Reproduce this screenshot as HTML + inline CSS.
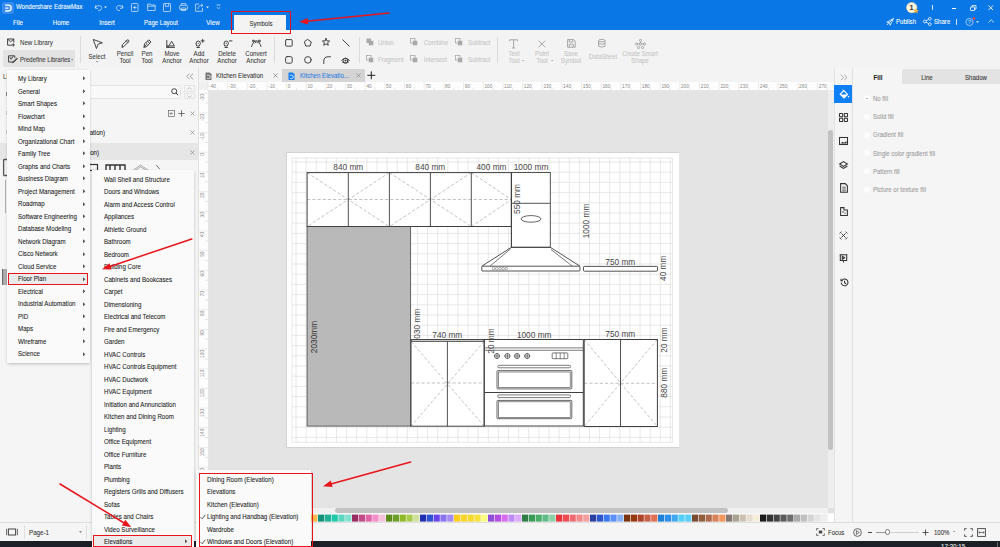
<!DOCTYPE html><html><head><meta charset="utf-8"><style>
html,body{margin:0;padding:0;width:1000px;height:547px;overflow:hidden;background:#f3f3f3;font-family:"Liberation Sans", sans-serif;}
.t{position:absolute;white-space:pre;line-height:1.2;font-family:"Liberation Sans", sans-serif;-webkit-text-stroke-width:0.08px;}
svg{position:absolute;overflow:visible}
</style></head><body>

<div style="position:absolute;left:0px;top:0px;width:1000px;height:30px;background:#0a77e6"></div>
<div style="position:absolute;left:0px;top:30px;width:1000px;height:38px;background:#f3f3f3"></div>
<div style="position:absolute;left:0px;top:67.5px;width:1000px;height:0.8px;background:#e2e2e2"></div>
<div style="position:absolute;left:0px;top:68px;width:198px;height:454px;background:#f5f5f5"></div>
<div style="position:absolute;left:198px;top:68px;width:1px;height:454px;background:#e0e0e0"></div>
<div style="position:absolute;left:199px;top:68px;width:636px;height:14px;background:#f3f3f3"></div>
<div style="position:absolute;left:199px;top:82px;width:636px;height:8px;background:#fafafa"></div>
<div style="position:absolute;left:199px;top:90px;width:9px;height:432px;background:#fafafa"></div>
<div style="position:absolute;left:208px;top:90px;width:620px;height:418px;background:#e4e4e4"></div>
<div style="position:absolute;left:835px;top:68px;width:165px;height:454px;background:#f5f5f5"></div>
<div style="position:absolute;left:0px;top:522px;width:1000px;height:19px;background:#f5f5f5"></div>
<div style="position:absolute;left:0px;top:522px;width:1000px;height:0.8px;background:#dedede"></div>
<div style="position:absolute;left:0px;top:541px;width:1000px;height:6px;background:#1c2026"></div>
<svg style="left:2px;top:1.5px" width="12" height="12" viewBox="0 0 12 12"><rect x="0" y="0" width="12" height="12" rx="2.5" fill="#3b8cf0"/><path d="M3.2 3.2 H6.3 A2.9 2.9 0 0 1 6.3 9 H3.2" fill="none" stroke="#fff" stroke-width="1.3"/><path d="M3.2 6.1 H6.6" stroke="#fff" stroke-width="1.2"/></svg>
<div class="t" style="left:15.8px;top:3.34px;font-size:7.26px;color:#fff;transform:scaleX(0.835);transform-origin:0 50%;">Wondershare EdrawMax</div>
<svg style="left:94px;top:3px" width="9" height="8" viewBox="0 0 9 8"><path d="M2 2 L1 5 L4 5.5" fill="none" stroke="#d6e6fa" stroke-width="0.75"/><path d="M1.3 4.8 C3 1.5 8 2 7.6 5.5 C7.3 7.2 5 7.6 4 7.5" fill="none" stroke="#d6e6fa" stroke-width="0.75"/></svg>
<svg style="left:103.5px;top:6px" width="4" height="3" viewBox="0 0 4 3"><path d="M0 0.5 L3 0.5 L1.5 2.2 Z" fill="#e6f0fc"/></svg>
<svg style="left:115px;top:3px" width="9" height="8" viewBox="0 0 9 8"><path d="M7 2 L8 5 L5 5.5" fill="none" stroke="#d6e6fa" stroke-width="0.75"/><path d="M7.7 4.8 C6 1.5 1 2 1.4 5.5 C1.7 7.2 4 7.6 5 7.5" fill="none" stroke="#d6e6fa" stroke-width="0.75"/></svg>
<svg style="left:130.5px;top:2.8px" width="8" height="9" viewBox="0 0 8 9"><rect x="0.5" y="0.5" width="6.5" height="8" rx="0.8" fill="none" stroke="#d6e6fa" stroke-width="0.75"/><path d="M3.75 2.7 V6.3 M1.95 4.5 H5.55" fill="none" stroke="#d6e6fa" stroke-width="0.75"/></svg>
<svg style="left:146.5px;top:3px" width="9" height="8" viewBox="0 0 9 8"><path d="M0.6 1 H3.3 L4.2 2 H8.2 V7.5 H0.6 Z" fill="none" stroke="#d6e6fa" stroke-width="0.75"/><path d="M0.6 3.2 H8.2" fill="none" stroke="#d6e6fa" stroke-width="0.75"/></svg>
<svg style="left:163px;top:2.8px" width="8" height="9" viewBox="0 0 8 9"><rect x="0.5" y="0.5" width="7" height="8" rx="0.6" fill="none" stroke="#d6e6fa" stroke-width="0.75"/><path d="M2.3 0.5 V3.3 H5.7 V0.5" fill="none" stroke="#d6e6fa" stroke-width="0.75"/></svg>
<svg style="left:178.5px;top:3px" width="9" height="8" viewBox="0 0 9 8"><rect x="0.5" y="2.3" width="8" height="4.2" rx="1.3" fill="none" stroke="#d6e6fa" stroke-width="0.75"/><path d="M2.2 2.3 V0.6 H6.8 V2.3 M2.2 5 H6.8 V7.5 H2.2 Z" fill="none" stroke="#d6e6fa" stroke-width="0.75"/></svg>
<svg style="left:195px;top:2.8px" width="9" height="9" viewBox="0 0 9 9"><path d="M4.2 1 H0.6 V8.3 H7.5 V4.8" fill="none" stroke="#d6e6fa" stroke-width="0.75"/><path d="M3 6 C3 3.5 4.5 2.3 7.8 2.3 M6.2 0.8 L7.9 2.3 L6.2 3.8" fill="none" stroke="#d6e6fa" stroke-width="0.75"/></svg>
<svg style="left:205.5px;top:6px" width="4" height="3" viewBox="0 0 4 3"><path d="M0 0.5 L3 0.5 L1.5 2.2 Z" fill="#e6f0fc"/></svg>
<svg style="left:215.5px;top:3.5px" width="5" height="7" viewBox="0 0 5 7"><path d="M0.5 1 H4.5 M1 3.2 L2.5 4.8 L4 3.2" fill="none" stroke="#d6e6fa" stroke-width="0.75"/></svg>
<svg style="left:905.5px;top:2.3px" width="14" height="12" viewBox="0 0 14 12"><circle cx="5.7" cy="5.6" r="5.2" fill="#fff4dd" stroke="#f3d9a1" stroke-width="0.6"/><text x="5.5" y="8.4" font-family="Liberation Sans" font-weight="bold" font-size="8" fill="#3c3c3c" text-anchor="middle">1</text><path d="M10 6.2 L10.9 8 L12.8 8.2 L11.4 9.4 L11.8 11.2 L10 10.3 L8.3 11.2 L8.7 9.4 L7.3 8.2 L9.2 8 Z" fill="#f7b23b"/></svg>
<div style="position:absolute;left:931.5px;top:4.5px;width:0.8px;height:5.5px;background:#cfe2f9"></div>
<div style="position:absolute;left:951.5px;top:8.3px;width:4.5px;height:0.9px;background:#fff"></div>
<svg style="left:969.5px;top:4.5px" width="7" height="6" viewBox="0 0 7 6"><rect x="0.5" y="2" width="4" height="3.5" rx="0.5" fill="none" stroke="#fff" stroke-width="0.8"/><path d="M2 2 V0.6 H6 V4 H4.5" fill="none" stroke="#fff" stroke-width="0.8"/></svg>
<svg style="left:987.5px;top:5px" width="6" height="6" viewBox="0 0 6 6"><path d="M0.5 0.5 L5 5 M5 0.5 L0.5 5" stroke="#fff" stroke-width="0.9"/></svg>
<div class="t" style="left:-82px;width:200px;text-align:center;top:19.14px;font-size:7.44px;color:#fff;transform:scaleX(0.835);transform-origin:50% 50%;">File</div>
<div class="t" style="left:-39px;width:200px;text-align:center;top:19.14px;font-size:7.44px;color:#fff;transform:scaleX(0.835);transform-origin:50% 50%;">Home</div>
<div class="t" style="left:7.200000000000003px;width:200px;text-align:center;top:19.14px;font-size:7.44px;color:#fff;transform:scaleX(0.835);transform-origin:50% 50%;">Insert</div>
<div class="t" style="left:60.599999999999994px;width:200px;text-align:center;top:19.24px;font-size:7.26px;color:#fff;transform:scaleX(0.835);transform-origin:50% 50%;">Page Layout</div>
<div class="t" style="left:113px;width:200px;text-align:center;top:19.14px;font-size:7.44px;color:#fff;transform:scaleX(0.835);transform-origin:50% 50%;">View</div>
<div style="position:absolute;left:234.4px;top:15px;width:52px;height:15px;background:#f3f3f3"></div>
<div class="t" style="left:160.5px;width:200px;text-align:center;top:19.64px;font-size:7.26px;color:#333;transform:scaleX(0.835);transform-origin:50% 50%;">Symbols</div>
<svg style="left:885.5px;top:17.5px" width="8" height="8" viewBox="0 0 8 8"><path d="M1 7 L3 4.5 M0.8 4.2 L7.5 0.5 L4.2 7.3 L3.4 4.5 Z M3.4 4.5 L7.5 0.5" fill="none" stroke="#fff" stroke-width="0.75"/></svg>
<div class="t" style="left:896px;top:17.81px;font-size:7.32px;color:#fff;transform:scaleX(0.835);transform-origin:0 50%;">Publish</div>
<svg style="left:922.5px;top:17px" width="9" height="9" viewBox="0 0 9 9"><circle cx="1.8" cy="4.5" r="1.4" fill="none" stroke="#fff" stroke-width="0.75"/><circle cx="6.8" cy="1.8" r="1.4" fill="none" stroke="#fff" stroke-width="0.75"/><circle cx="6.8" cy="7.2" r="1.4" fill="none" stroke="#fff" stroke-width="0.75"/><path d="M3 3.8 L5.6 2.4 M3 5.2 L5.6 6.6" stroke="#fff" stroke-width="0.75"/></svg>
<div class="t" style="left:933.8px;top:17.81px;font-size:7.32px;color:#fff;transform:scaleX(0.835);transform-origin:0 50%;">Share</div>
<div style="position:absolute;left:956px;top:18.5px;width:0.8px;height:6px;background:#cfe2f9"></div>
<svg style="left:964.5px;top:16.5px" width="12" height="10" viewBox="0 0 12 10"><circle cx="4.5" cy="5" r="3.6" fill="none" stroke="#cfe2f9" stroke-width="0.7"/><text x="4.5" y="7" font-family="Liberation Sans" font-size="5.5" fill="#cfe2f9" text-anchor="middle">?</text><circle cx="9" cy="1.5" r="1.2" fill="#ff3b3b"/></svg>
<svg style="left:976.2px;top:20.5px" width="4" height="3" viewBox="0 0 4 3"><path d="M0 0.3 L3 0.3 L1.5 2 Z" fill="#e6f0fc"/></svg>
<svg style="left:987.5px;top:18.5px" width="7" height="5" viewBox="0 0 7 5"><path d="M0.5 3.5 L3.2 0.8 L6 3.5" fill="none" stroke="#e6f0fc" stroke-width="0.8"/></svg>
<div style="position:absolute;left:231.2px;top:11px;width:59.8px;height:23px;border:1.9px solid #e8141b;box-sizing:border-box"></div>
<svg style="left:292.5px;top:7.199999999999999px" width="102.0" height="21.1" viewBox="0 0 102.0 21.1"><path d="M96.00 6.00 L11.37 14.56" stroke="#e8141b" stroke-width="1.5" stroke-linecap="round"/><path d="M6.00 15.10 L14.62 10.91 L15.29 17.48 Z" fill="#e8141b"/></svg>
<svg style="left:7.2px;top:38px" width="9" height="9" viewBox="0 0 9 9"><path d="M6.8 4.2 V1 H0.6 V7.2 H4.5" fill="none" stroke="#3a3a3a" stroke-width="0.95" stroke-linejoin="round" stroke-linecap="round"/><path d="M0.6 1.2 L3.7 3.8 L6.8 1.2" fill="none" stroke="#3a3a3a" stroke-width="0.95" stroke-linejoin="round" stroke-linecap="round"/><path d="M6.3 5.3 V8.6 M4.7 6.9 H7.9" fill="none" stroke="#3a3a3a" stroke-width="0.9"/></svg>
<div class="t" style="left:19.8px;top:39.17px;font-size:7.38px;color:#3c3c3c;transform:scaleX(0.835);transform-origin:0 50%;">New Library</div>
<div style="position:absolute;left:3.2px;top:50.3px;width:72px;height:16.6px;background:#e3e3e3"></div>
<svg style="left:7.5px;top:55px" width="10" height="8" viewBox="0 0 10 8"><path d="M6.8 2.5 V0.8 H0.6 V7 H5" fill="none" stroke="#3a3a3a" stroke-width="0.95" stroke-linejoin="round" stroke-linecap="round"/><path d="M2 2.5 L3.2 4.3 L5 1.5" fill="none" stroke="#3a3a3a" stroke-width="0.95" stroke-linejoin="round" stroke-linecap="round"/><path d="M5 6.8 L8.8 3 L9.4 3.6 L5.6 7.4 L4.7 7.6 Z" fill="none" stroke="#3a3a3a" stroke-width="0.95" stroke-linejoin="round" stroke-linecap="round"/></svg>
<div class="t" style="left:19.8px;top:55.98px;font-size:7.20px;color:#3c3c3c;transform:scaleX(0.835);transform-origin:0 50%;">Predefine Libraries</div>
<svg style="left:71px;top:58.5px" width="3" height="2" viewBox="0 0 3 2"><path d="M0 0 L2.4 0 L1.2 1.2 Z" fill="#777"/></svg>
<div style="position:absolute;left:80.2px;top:36.3px;width:0.8px;height:26.5px;background:#dcdcdc"></div>
<svg style="left:92.6px;top:38.8px" width="10" height="10" viewBox="0 0 10 10"><path d="M0.6 0.6 L9.4 3.8 L5.2 5.1 L3.6 9.2 Z" fill="none" stroke="#3a3a3a" stroke-width="0.95" stroke-linejoin="round" stroke-linecap="round"/></svg>
<div class="t" style="left:-2.799999999999997px;width:200px;text-align:center;top:52.91px;font-size:7.32px;color:#3c3c3c;transform:scaleX(0.835);transform-origin:50% 50%;">Select</div>
<svg style="left:96px;top:60.5px" width="3" height="2" viewBox="0 0 3 2"><path d="M0 0 L2.4 0 L1.2 1.2 Z" fill="#777"/></svg>
<svg style="left:120.5px;top:39px" width="9" height="9" viewBox="0 0 9 9"><path d="M1 8 L1.3 5.8 L6 1.1 Q6.8 0.4 7.6 1.2 Q8.3 2 7.6 2.7 L2.9 7.5 Z M5.2 1.9 L6.9 3.6" fill="none" stroke="#3a3a3a" stroke-width="0.95" stroke-linejoin="round" stroke-linecap="round"/><path d="M1 8 L1.2 6.5 L2.4 7.7 Z" fill="#3a3a3a"/></svg>
<div class="t" style="left:24.700000000000003px;width:200px;text-align:center;top:49.51px;font-size:7.32px;color:#3c3c3c;transform:scaleX(0.835);transform-origin:50% 50%;">Pencil</div>
<div class="t" style="left:24.700000000000003px;width:200px;text-align:center;top:57.31px;font-size:7.32px;color:#3c3c3c;transform:scaleX(0.835);transform-origin:50% 50%;">Tool</div>
<svg style="left:142.8px;top:39px" width="9" height="9" viewBox="0 0 9 9"><path d="M1 8 L1.6 4.6 L4.5 2.2 L6.6 4.3 L4.2 7.2 Z M4.5 2.2 L5.8 0.8 L8 3 L6.6 4.3" fill="none" stroke="#3a3a3a" stroke-width="0.95" stroke-linejoin="round" stroke-linecap="round"/><circle cx="3.8" cy="5" r="0.7" fill="#3a3a3a"/><path d="M1 8 L3 6" fill="none" stroke="#3a3a3a" stroke-width="0.95" stroke-linejoin="round" stroke-linecap="round"/></svg>
<div class="t" style="left:47.19999999999999px;width:200px;text-align:center;top:49.51px;font-size:7.32px;color:#3c3c3c;transform:scaleX(0.835);transform-origin:50% 50%;">Pen</div>
<div class="t" style="left:47.19999999999999px;width:200px;text-align:center;top:57.31px;font-size:7.32px;color:#3c3c3c;transform:scaleX(0.835);transform-origin:50% 50%;">Tool</div>
<svg style="left:166px;top:39.5px" width="9" height="9" viewBox="0 0 9 9"><path d="M0.8 0.5 V7 M0.8 7.4 H8.6" fill="none" stroke="#3a3a3a" stroke-width="0.95" stroke-linejoin="round" stroke-linecap="round"/><path d="M3 5.6 L5.6 1.3 L8.2 5.6 Z" fill="none" stroke="#3a3a3a" stroke-width="0.95" stroke-linejoin="round" stroke-linecap="round"/><circle cx="1.6" cy="6.5" r="0.9" fill="none" stroke="#3a3a3a" stroke-width="0.95" stroke-linejoin="round" stroke-linecap="round"/></svg>
<div class="t" style="left:71.6px;width:200px;text-align:center;top:49.51px;font-size:7.32px;color:#3c3c3c;transform:scaleX(0.835);transform-origin:50% 50%;">Move</div>
<div class="t" style="left:71.6px;width:200px;text-align:center;top:57.31px;font-size:7.32px;color:#3c3c3c;transform:scaleX(0.835);transform-origin:50% 50%;">Anchor</div>
<svg style="left:194.8px;top:38.5px" width="10" height="10" viewBox="0 0 10 10"><path d="M1 4.5 Q1 2 3.2 2 Q5.4 2 5.4 4.5 L4.3 7 H2.1 Z" fill="none" stroke="#3a3a3a" stroke-width="0.95" stroke-linejoin="round" stroke-linecap="round"/><path d="M2 8.5 H4.4" fill="none" stroke="#3a3a3a" stroke-width="0.95" stroke-linejoin="round" stroke-linecap="round"/><circle cx="3.2" cy="4.3" r="0.6" fill="#3a3a3a"/><path d="M7.7 0.4 V3.4 M6.2 1.9 H9.2" fill="none" stroke="#3a3a3a" stroke-width="0.95" stroke-linejoin="round" stroke-linecap="round"/></svg>
<div class="t" style="left:99.30000000000001px;width:200px;text-align:center;top:49.51px;font-size:7.32px;color:#3c3c3c;transform:scaleX(0.835);transform-origin:50% 50%;">Add</div>
<div class="t" style="left:99.30000000000001px;width:200px;text-align:center;top:57.31px;font-size:7.32px;color:#3c3c3c;transform:scaleX(0.835);transform-origin:50% 50%;">Anchor</div>
<svg style="left:222.8px;top:38.5px" width="10" height="10" viewBox="0 0 10 10"><path d="M1 4.5 Q1 2 3.2 2 Q5.4 2 5.4 4.5 L4.3 7 H2.1 Z" fill="none" stroke="#3a3a3a" stroke-width="0.95" stroke-linejoin="round" stroke-linecap="round"/><path d="M2 8.5 H4.4" fill="none" stroke="#3a3a3a" stroke-width="0.95" stroke-linejoin="round" stroke-linecap="round"/><circle cx="3.2" cy="4.3" r="0.6" fill="#3a3a3a"/><path d="M6.4 1.9 H9" fill="none" stroke="#3a3a3a" stroke-width="0.95" stroke-linejoin="round" stroke-linecap="round"/></svg>
<div class="t" style="left:127.4px;width:200px;text-align:center;top:49.51px;font-size:7.32px;color:#3c3c3c;transform:scaleX(0.835);transform-origin:50% 50%;">Delete</div>
<div class="t" style="left:127.4px;width:200px;text-align:center;top:57.31px;font-size:7.32px;color:#3c3c3c;transform:scaleX(0.835);transform-origin:50% 50%;">Anchor</div>
<svg style="left:251px;top:39px" width="11" height="9" viewBox="0 0 11 9"><path d="M0.6 7.5 Q2.5 1.8 5.3 1.8 Q8.2 1.8 10 7.5" fill="none" stroke="#3a3a3a" stroke-width="0.95" stroke-linejoin="round" stroke-linecap="round"/><circle cx="2.3" cy="2" r="0.9" fill="none" stroke="#3a3a3a" stroke-width="0.95" stroke-linejoin="round" stroke-linecap="round"/><circle cx="8.3" cy="2" r="0.9" fill="none" stroke="#3a3a3a" stroke-width="0.95" stroke-linejoin="round" stroke-linecap="round"/><path d="M4 4 L5.3 2.6 L6.6 4" fill="none" stroke="#3a3a3a" stroke-width="0.95" stroke-linejoin="round" stroke-linecap="round"/></svg>
<div class="t" style="left:156.3px;width:200px;text-align:center;top:49.51px;font-size:7.32px;color:#3c3c3c;transform:scaleX(0.835);transform-origin:50% 50%;">Convert</div>
<div class="t" style="left:156.3px;width:200px;text-align:center;top:57.31px;font-size:7.32px;color:#3c3c3c;transform:scaleX(0.835);transform-origin:50% 50%;">Anchor</div>
<div style="position:absolute;left:274.3px;top:36.8px;width:0.8px;height:26px;background:#dcdcdc"></div>
<svg style="left:284.5px;top:38.5px" width="8" height="8" viewBox="0 0 8 8"><rect x="0.6" y="0.6" width="6.6" height="6.6" rx="0.8" fill="none" stroke="#3a3a3a" stroke-width="0.95" stroke-linejoin="round" stroke-linecap="round"/></svg>
<svg style="left:303.5px;top:38.5px" width="8" height="8" viewBox="0 0 8 8"><path d="M3.9 0.6 L7.3 3 L6.1 7 H1.7 L0.5 3 Z" fill="none" stroke="#3a3a3a" stroke-width="0.95" stroke-linejoin="round" stroke-linecap="round"/></svg>
<svg style="left:322.3px;top:38.3px" width="8" height="8" viewBox="0 0 8 8"><path d="M4 0.5 L5 2.9 L7.6 3 L5.6 4.7 L6.3 7.3 L4 5.9 L1.7 7.3 L2.4 4.7 L0.4 3 L3 2.9 Z" fill="none" stroke="#3a3a3a" stroke-width="0.95" stroke-linejoin="round" stroke-linecap="round"/></svg>
<svg style="left:341.5px;top:38.5px" width="8" height="8" viewBox="0 0 8 8"><path d="M0.8 0.8 L7.2 7.2" fill="none" stroke="#3a3a3a" stroke-width="0.95" stroke-linejoin="round" stroke-linecap="round"/></svg>
<svg style="left:284.5px;top:55.5px" width="8" height="8" viewBox="0 0 8 8"><rect x="0.6" y="0.6" width="6.6" height="6.6" rx="1.6" fill="none" stroke="#3a3a3a" stroke-width="0.95" stroke-linejoin="round" stroke-linecap="round"/></svg>
<svg style="left:303.5px;top:55.5px" width="8" height="8" viewBox="0 0 8 8"><circle cx="3.9" cy="3.9" r="3.3" fill="none" stroke="#3a3a3a" stroke-width="0.95" stroke-linejoin="round" stroke-linecap="round"/></svg>
<svg style="left:322.5px;top:55.5px" width="8" height="8" viewBox="0 0 8 8"><path d="M0.8 7.5 V5 Q0.8 0.8 5 0.8 H7.5" fill="none" stroke="#3a3a3a" stroke-width="0.95" stroke-linejoin="round" stroke-linecap="round"/></svg>
<svg style="left:341px;top:55.5px" width="9" height="8" viewBox="0 0 9 8"><path d="M0.6 4.6 Q4.5 -0.6 8.4 4.6" fill="none" stroke="#3a3a3a" stroke-width="0.95" stroke-linejoin="round" stroke-linecap="round"/><circle cx="4.5" cy="4.6" r="2.4" fill="none" stroke="#3a3a3a" stroke-width="0.95" stroke-linejoin="round" stroke-linecap="round"/><circle cx="4.5" cy="4.6" r="1" fill="#3a3a3a"/><path d="M1.5 6.3 Q4.5 8.5 7.5 6.3" fill="none" stroke="#3a3a3a" stroke-width="0.95" stroke-linejoin="round" stroke-linecap="round"/></svg>
<div style="position:absolute;left:359.3px;top:36.8px;width:0.8px;height:26px;background:#dcdcdc"></div>
<svg style="left:365.5px;top:38px" width="8" height="8" viewBox="0 0 8 8"><rect x="0.5" y="0.5" width="4.5" height="4.5" fill="#a8a8a8"/><rect x="2.8" y="2.8" width="4.5" height="4.5" fill="#a8a8a8"/></svg>
<div class="t" style="left:378px;top:38.68px;font-size:7.20px;color:#c6c6c6;transform:scaleX(0.835);transform-origin:0 50%;">Union</div>
<svg style="left:410.4px;top:38px" width="8" height="8" viewBox="0 0 8 8"><rect x="0.5" y="0.5" width="4.5" height="4.5" fill="none" stroke="#a8a8a8" stroke-width="0.8"/><rect x="2.8" y="2.8" width="4.5" height="4.5" fill="#a8a8a8"/></svg>
<div class="t" style="left:423.6px;top:38.68px;font-size:7.20px;color:#c6c6c6;transform:scaleX(0.835);transform-origin:0 50%;">Combine</div>
<svg style="left:455px;top:38px" width="8" height="8" viewBox="0 0 8 8"><rect x="0.5" y="0.5" width="4.5" height="4.5" fill="none" stroke="#a8a8a8" stroke-width="0.8"/><rect x="2.8" y="2.8" width="4.5" height="4.5" fill="#a8a8a8"/></svg>
<div class="t" style="left:467.7px;top:38.68px;font-size:7.20px;color:#c6c6c6;transform:scaleX(0.835);transform-origin:0 50%;">Subtract</div>
<svg style="left:365.5px;top:55.2px" width="8" height="8" viewBox="0 0 8 8"><rect x="0.5" y="0.5" width="4.5" height="4.5" fill="none" stroke="#a8a8a8" stroke-width="0.8"/><rect x="2.8" y="2.8" width="4.5" height="4.5" fill="#a8a8a8"/></svg>
<div class="t" style="left:378px;top:55.88px;font-size:7.20px;color:#c6c6c6;transform:scaleX(0.835);transform-origin:0 50%;">Fragment</div>
<svg style="left:410.4px;top:55.2px" width="8" height="8" viewBox="0 0 8 8"><rect x="0.5" y="0.5" width="4.5" height="4.5" fill="none" stroke="#a8a8a8" stroke-width="0.8"/><rect x="2.8" y="2.8" width="4.5" height="4.5" fill="#a8a8a8"/></svg>
<div class="t" style="left:423.6px;top:55.88px;font-size:7.20px;color:#c6c6c6;transform:scaleX(0.835);transform-origin:0 50%;">Intersect</div>
<svg style="left:455px;top:55.2px" width="8" height="8" viewBox="0 0 8 8"><rect x="0.5" y="0.5" width="4.5" height="4.5" fill="none" stroke="#a8a8a8" stroke-width="0.8"/><rect x="2.8" y="2.8" width="4.5" height="4.5" fill="#a8a8a8"/></svg>
<div class="t" style="left:467.7px;top:55.88px;font-size:7.20px;color:#c6c6c6;transform:scaleX(0.835);transform-origin:0 50%;">Subtract</div>
<div style="position:absolute;left:497.3px;top:36.8px;width:0.8px;height:26px;background:#dcdcdc"></div>
<svg style="left:508.8px;top:38.8px" width="10" height="10" viewBox="0 0 10 10"><path d="M0.6 2.2 V0.8 H8.6 V2.2 M4.6 0.8 V9 M3 9 H6.2" fill="none" stroke="#9a9a9a" stroke-width="0.85"/></svg>
<div class="t" style="left:413.79999999999995px;width:200px;text-align:center;top:49.51px;font-size:7.32px;color:#c6c6c6;transform:scaleX(0.835);transform-origin:50% 50%;">Text</div>
<div class="t" style="left:413.79999999999995px;width:200px;text-align:center;top:57.31px;font-size:7.32px;color:#c6c6c6;transform:scaleX(0.835);transform-origin:50% 50%;">Tool</div>
<svg style="left:522.2px;top:59.8px" width="3" height="2" viewBox="0 0 3 2"><path d="M0 0 L2.4 0 L1.2 1.2 Z" fill="#aaa"/></svg>
<svg style="left:537.5px;top:39.5px" width="8" height="8" viewBox="0 0 8 8"><path d="M0.6 0.6 L7.2 7.2 M7.2 0.6 L0.6 7.2" fill="none" stroke="#9a9a9a" stroke-width="0.85"/></svg>
<div class="t" style="left:441.70000000000005px;width:200px;text-align:center;top:49.51px;font-size:7.32px;color:#c6c6c6;transform:scaleX(0.835);transform-origin:50% 50%;">Point</div>
<div class="t" style="left:441.9px;width:200px;text-align:center;top:57.31px;font-size:7.32px;color:#c6c6c6;transform:scaleX(0.835);transform-origin:50% 50%;">Tool</div>
<svg style="left:551px;top:59.8px" width="3" height="2" viewBox="0 0 3 2"><path d="M0 0 L2.4 0 L1.2 1.2 Z" fill="#aaa"/></svg>
<svg style="left:567.2px;top:39.2px" width="9" height="9" viewBox="0 0 9 9"><path d="M0.6 0.6 H6.6 L8.2 2.2 V8.2 H0.6 Z M2.3 0.6 V3 H5.8 V0.6 M2.3 8.2 V5.2 H6.3 V8.2" fill="none" stroke="#9a9a9a" stroke-width="0.85"/></svg>
<div class="t" style="left:471.20000000000005px;width:200px;text-align:center;top:49.51px;font-size:7.32px;color:#c6c6c6;transform:scaleX(0.835);transform-origin:50% 50%;">Save</div>
<div class="t" style="left:471.20000000000005px;width:200px;text-align:center;top:57.31px;font-size:7.32px;color:#c6c6c6;transform:scaleX(0.835);transform-origin:50% 50%;">Symbol</div>
<svg style="left:598px;top:39.2px" width="8" height="9" viewBox="0 0 8 9"><ellipse cx="3.8" cy="1.6" rx="3.2" ry="1.2" fill="none" stroke="#9a9a9a" stroke-width="0.85"/><path d="M0.6 1.6 V7.2 Q3.8 9 7 7.2 V1.6 M0.6 4.4 Q3.8 6.2 7 4.4" fill="none" stroke="#9a9a9a" stroke-width="0.85"/></svg>
<div class="t" style="left:502.6px;width:200px;text-align:center;top:52.98px;font-size:7.20px;color:#c6c6c6;transform:scaleX(0.835);transform-origin:50% 50%;">DataSheet</div>
<svg style="left:634.5px;top:38.6px" width="11" height="10" viewBox="0 0 11 10"><circle cx="5.5" cy="1.5" r="1.1" fill="none" stroke="#9a9a9a" stroke-width="0.85"/><circle cx="1.6" cy="5" r="1.1" fill="none" stroke="#9a9a9a" stroke-width="0.85"/><circle cx="5.5" cy="5" r="1.1" fill="none" stroke="#9a9a9a" stroke-width="0.85"/><circle cx="9.4" cy="5" r="1.1" fill="none" stroke="#9a9a9a" stroke-width="0.85"/><circle cx="3.5" cy="8.5" r="1.1" fill="none" stroke="#9a9a9a" stroke-width="0.85"/><circle cx="7.5" cy="8.5" r="1.1" fill="none" stroke="#9a9a9a" stroke-width="0.85"/><path d="M5.5 2.6 V3.9 M2.7 5 H4.4 M6.6 5 H8.3" fill="none" stroke="#9a9a9a" stroke-width="0.85"/></svg>
<div class="t" style="left:539.5px;width:200px;text-align:center;top:49.58px;font-size:7.20px;color:#c6c6c6;transform:scaleX(0.835);transform-origin:50% 50%;">Create Smart</div>
<div class="t" style="left:539.5px;width:200px;text-align:center;top:57.38px;font-size:7.20px;color:#c6c6c6;transform:scaleX(0.835);transform-origin:50% 50%;">Shape</div>
<div class="t" style="left:3px;top:73.11px;font-size:7.32px;color:#444;transform:scaleX(0.835);transform-origin:0 50%;">Libraries</div>
<svg style="left:185.5px;top:72.5px" width="8" height="7" viewBox="0 0 8 7"><path d="M3.6 0.6 L0.8 3.4 L3.6 6.2 M7 0.6 L4.2 3.4 L7 6.2" fill="none" stroke="#777" stroke-width="0.7"/></svg>
<div style="position:absolute;left:7px;top:85.4px;width:174px;height:13.8px;background:#f9f9f9;border:0.8px solid #e4e4e4;box-sizing:border-box;border-radius:1.5px"></div>
<svg style="left:170.5px;top:87.5px" width="8" height="8" viewBox="0 0 8 8"><circle cx="3.2" cy="3.2" r="2.5" fill="none" stroke="#333" stroke-width="0.9"/><path d="M5 5 L7.2 7.2" stroke="#333" stroke-width="1"/></svg>
<div style="position:absolute;left:184.2px;top:85.4px;width:10.5px;height:6.6px;border:0.7px solid #e4e4e4;box-sizing:border-box;border-radius:1px"></div>
<div style="position:absolute;left:184.2px;top:93px;width:10.5px;height:6.4px;border:0.7px solid #e4e4e4;box-sizing:border-box;border-radius:1px"></div>
<svg style="left:187px;top:87px" width="5" height="3" viewBox="0 0 5 3"><path d="M0.4 2.4 L2.5 0.6 L4.6 2.4" fill="none" stroke="#999" stroke-width="0.6"/></svg>
<svg style="left:187px;top:95px" width="5" height="3" viewBox="0 0 5 3"><path d="M0.4 0.6 L2.5 2.4 L4.6 0.6" fill="none" stroke="#999" stroke-width="0.6"/></svg>
<div style="position:absolute;left:5.8px;top:91.5px;width:1.2px;height:4px;background:#888"></div>
<div style="position:absolute;left:5.8px;top:111px;width:1px;height:4px;background:#ccc"></div>
<div style="position:absolute;left:5.8px;top:129.5px;width:1px;height:4px;background:#ccc"></div>
<svg style="left:167.5px;top:109.8px" width="7" height="7" viewBox="0 0 7 7"><rect x="0.5" y="0.5" width="6" height="6" fill="none" stroke="#666" stroke-width="0.7"/><path d="M5 3.5 H2 M3.3 2.2 L2 3.5 L3.3 4.8" fill="none" stroke="#666" stroke-width="0.7"/></svg>
<svg style="left:177.8px;top:109.8px" width="7" height="7" viewBox="0 0 7 7"><path d="M3.5 0.3 V6.7 M0.3 3.5 H6.7" stroke="#555" stroke-width="0.8"/></svg>
<svg style="left:189.5px;top:110.8px" width="5" height="5" viewBox="0 0 5 5"><path d="M0.5 0.5 L4.5 4.5 M4.5 0.5 L0.5 4.5" stroke="#888" stroke-width="0.7"/></svg>
<div class="t" style="left:-94.8px;width:200px;text-align:right;top:129.21px;font-size:7.32px;color:#1a1a1a;transform:scaleX(0.835);transform-origin:100% 50%;">Windows and Doors (Elevation)</div>
<svg style="left:189.5px;top:130.3px" width="5" height="5" viewBox="0 0 5 5"><path d="M0.5 0.5 L4.5 4.5 M4.5 0.5 L0.5 4.5" stroke="#888" stroke-width="0.7"/></svg>
<div style="position:absolute;left:0px;top:142.7px;width:198px;height:17.8px;background:#e6e6e6"></div>
<div class="t" style="left:-101.5px;width:200px;text-align:right;top:148.91px;font-size:7.32px;color:#1a1a1a;transform:scaleX(0.835);transform-origin:100% 50%;">Lighting and Handbag (Elevation)</div>
<svg style="left:189.5px;top:150px" width="5" height="5" viewBox="0 0 5 5"><path d="M0.5 0.5 L4.5 4.5 M4.5 0.5 L0.5 4.5" stroke="#888" stroke-width="0.7"/></svg>
<svg style="left:3px;top:164px" width="195" height="30" viewBox="0 0 195 30"><path d="M0.6 -4.5 V11.5 M0.6 -4.5 H4 M0.6 11.5 H4" fill="none" stroke="#555" stroke-width="1.3"/><rect x="86.5" y="0.5" width="8" height="6" fill="none" stroke="#333" stroke-width="1.2"/><path d="M103 6 V1 H122 V6 M107 1 V6 M112 1 V6 M117 1 V6" fill="none" stroke="#333" stroke-width="1.4"/><path d="M127.7 8 L137.5 1 L147.8 8 M130 8 L137.5 2.8 L145.5 8" fill="none" stroke="#777" stroke-width="0.6"/><path d="M153.3 1 L156.7 5" stroke="#555" stroke-width="0.8"/></svg>
<div style="position:absolute;left:4.8px;top:180px;width:1.3px;height:32.5px;background:#b0b0b0"></div>
<svg style="left:2px;top:269px" width="6" height="16" viewBox="0 0 6 16"><path d="M0.6 0 V16 M0.5 1 H5.5 M0.5 3 H5.5 M0.5 5 H5.5 M0.5 7 H5.5 M0.5 9 H5.5 M0.5 11 H5.5 M0.5 13 H5.5 M0.5 15 H5.5" stroke="#444" stroke-width="0.8"/></svg>
<svg style="left:204.5px;top:72px" width="7" height="8.5" viewBox="0 0 7 8.5"><path d="M0.5 0.5 H4.8 L6.5 2.2 V8 H0.5 Z" fill="#777"/><path d="M2 3.3 H3.7 A1.6 1.6 0 0 1 3.7 6.5 H2" fill="none" stroke="#fff" stroke-width="0.7"/></svg>
<div class="t" style="left:216px;top:72.11px;font-size:7.32px;color:#333;transform:scaleX(0.835);transform-origin:0 50%;">Kitchen Elevation</div>
<svg style="left:272.5px;top:73px" width="5" height="5" viewBox="0 0 5 5"><path d="M0.5 0.5 L4.5 4.5 M4.5 0.5 L0.5 4.5" stroke="#777" stroke-width="0.7"/></svg>
<div style="position:absolute;left:282px;top:69.4px;width:83.3px;height:12.3px;background:#d4d4d4"></div>
<svg style="left:288.2px;top:71.5px" width="7" height="8.5" viewBox="0 0 7 8.5"><path d="M0.5 0.5 H4.8 L6.5 2.2 V8 H0.5 Z" fill="#1a7ef0"/><path d="M2 3.3 H3.7 A1.6 1.6 0 0 1 3.7 6.5 H2" fill="none" stroke="#fff" stroke-width="0.7"/></svg>
<div class="t" style="left:299.7px;top:72.11px;font-size:7.32px;color:#2b7de0;transform:scaleX(0.835);transform-origin:0 50%;">Kitchen Elevatio...</div>
<svg style="left:356px;top:73px" width="5" height="5" viewBox="0 0 5 5"><path d="M0.5 0.5 L4.5 4.5 M4.5 0.5 L0.5 4.5" stroke="#888" stroke-width="0.7"/></svg>
<svg style="left:367.3px;top:71.3px" width="9" height="9" viewBox="0 0 9 9"><path d="M4.3 0.3 V8.3 M0.3 4.3 H8.3" stroke="#222" stroke-width="1"/></svg>
<div style="position:absolute;left:199px;top:81.7px;width:9px;height:8.6px;background:#f0f0f0"></div>
<div style="position:absolute;left:208px;top:81.7px;width:620px;height:8.6px;background:#fdfdfd"></div>
<div style="position:absolute;left:199px;top:90.3px;width:9px;height:417.7px;background:#fdfdfd"></div>
<svg style="left:208px;top:81.7px" width="620" height="8.6" viewBox="0 0 620 8.6"><path d="M-0.32 0.3 V8.6" stroke="#e2e2e2" stroke-width="0.7"/><text x="0.88" y="5.6" font-family="Liberation Sans" font-size="4.8" fill="#8a8a8a">-40</text><path d="M9.52 5.5 V8.6" stroke="#dcdcdc" stroke-width="0.7"/><path d="M19.36 0.3 V8.6" stroke="#e2e2e2" stroke-width="0.7"/><text x="20.56" y="5.6" font-family="Liberation Sans" font-size="4.8" fill="#8a8a8a">-30</text><path d="M29.20 5.5 V8.6" stroke="#dcdcdc" stroke-width="0.7"/><path d="M39.04 0.3 V8.6" stroke="#e2e2e2" stroke-width="0.7"/><text x="40.24" y="5.6" font-family="Liberation Sans" font-size="4.8" fill="#8a8a8a">-20</text><path d="M48.88 5.5 V8.6" stroke="#dcdcdc" stroke-width="0.7"/><path d="M58.72 0.3 V8.6" stroke="#e2e2e2" stroke-width="0.7"/><text x="59.92" y="5.6" font-family="Liberation Sans" font-size="4.8" fill="#8a8a8a">-10</text><path d="M68.56 5.5 V8.6" stroke="#dcdcdc" stroke-width="0.7"/><path d="M78.40 0.3 V8.6" stroke="#e2e2e2" stroke-width="0.7"/><text x="79.60" y="5.6" font-family="Liberation Sans" font-size="4.8" fill="#8a8a8a">0</text><path d="M88.24 5.5 V8.6" stroke="#dcdcdc" stroke-width="0.7"/><path d="M98.08 0.3 V8.6" stroke="#e2e2e2" stroke-width="0.7"/><text x="99.28" y="5.6" font-family="Liberation Sans" font-size="4.8" fill="#8a8a8a">10</text><path d="M107.92 5.5 V8.6" stroke="#dcdcdc" stroke-width="0.7"/><path d="M117.76 0.3 V8.6" stroke="#e2e2e2" stroke-width="0.7"/><text x="118.96" y="5.6" font-family="Liberation Sans" font-size="4.8" fill="#8a8a8a">20</text><path d="M127.60 5.5 V8.6" stroke="#dcdcdc" stroke-width="0.7"/><path d="M137.44 0.3 V8.6" stroke="#e2e2e2" stroke-width="0.7"/><text x="138.64" y="5.6" font-family="Liberation Sans" font-size="4.8" fill="#8a8a8a">30</text><path d="M147.28 5.5 V8.6" stroke="#dcdcdc" stroke-width="0.7"/><path d="M157.12 0.3 V8.6" stroke="#e2e2e2" stroke-width="0.7"/><text x="158.32" y="5.6" font-family="Liberation Sans" font-size="4.8" fill="#8a8a8a">40</text><path d="M166.96 5.5 V8.6" stroke="#dcdcdc" stroke-width="0.7"/><path d="M176.80 0.3 V8.6" stroke="#e2e2e2" stroke-width="0.7"/><text x="178.00" y="5.6" font-family="Liberation Sans" font-size="4.8" fill="#8a8a8a">50</text><path d="M186.64 5.5 V8.6" stroke="#dcdcdc" stroke-width="0.7"/><path d="M196.48 0.3 V8.6" stroke="#e2e2e2" stroke-width="0.7"/><text x="197.68" y="5.6" font-family="Liberation Sans" font-size="4.8" fill="#8a8a8a">60</text><path d="M206.32 5.5 V8.6" stroke="#dcdcdc" stroke-width="0.7"/><path d="M216.16 0.3 V8.6" stroke="#e2e2e2" stroke-width="0.7"/><text x="217.36" y="5.6" font-family="Liberation Sans" font-size="4.8" fill="#8a8a8a">70</text><path d="M226.00 5.5 V8.6" stroke="#dcdcdc" stroke-width="0.7"/><path d="M235.84 0.3 V8.6" stroke="#e2e2e2" stroke-width="0.7"/><text x="237.04" y="5.6" font-family="Liberation Sans" font-size="4.8" fill="#8a8a8a">80</text><path d="M245.68 5.5 V8.6" stroke="#dcdcdc" stroke-width="0.7"/><path d="M255.52 0.3 V8.6" stroke="#e2e2e2" stroke-width="0.7"/><text x="256.72" y="5.6" font-family="Liberation Sans" font-size="4.8" fill="#8a8a8a">90</text><path d="M265.36 5.5 V8.6" stroke="#dcdcdc" stroke-width="0.7"/><path d="M275.20 0.3 V8.6" stroke="#e2e2e2" stroke-width="0.7"/><text x="276.40" y="5.6" font-family="Liberation Sans" font-size="4.8" fill="#8a8a8a">100</text><path d="M285.04 5.5 V8.6" stroke="#dcdcdc" stroke-width="0.7"/><path d="M294.88 0.3 V8.6" stroke="#e2e2e2" stroke-width="0.7"/><text x="296.08" y="5.6" font-family="Liberation Sans" font-size="4.8" fill="#8a8a8a">110</text><path d="M304.72 5.5 V8.6" stroke="#dcdcdc" stroke-width="0.7"/><path d="M314.56 0.3 V8.6" stroke="#e2e2e2" stroke-width="0.7"/><text x="315.76" y="5.6" font-family="Liberation Sans" font-size="4.8" fill="#8a8a8a">120</text><path d="M324.40 5.5 V8.6" stroke="#dcdcdc" stroke-width="0.7"/><path d="M334.24 0.3 V8.6" stroke="#e2e2e2" stroke-width="0.7"/><text x="335.44" y="5.6" font-family="Liberation Sans" font-size="4.8" fill="#8a8a8a">130</text><path d="M344.08 5.5 V8.6" stroke="#dcdcdc" stroke-width="0.7"/><path d="M353.92 0.3 V8.6" stroke="#e2e2e2" stroke-width="0.7"/><text x="355.12" y="5.6" font-family="Liberation Sans" font-size="4.8" fill="#8a8a8a">140</text><path d="M363.76 5.5 V8.6" stroke="#dcdcdc" stroke-width="0.7"/><path d="M373.60 0.3 V8.6" stroke="#e2e2e2" stroke-width="0.7"/><text x="374.80" y="5.6" font-family="Liberation Sans" font-size="4.8" fill="#8a8a8a">150</text><path d="M383.44 5.5 V8.6" stroke="#dcdcdc" stroke-width="0.7"/><path d="M393.28 0.3 V8.6" stroke="#e2e2e2" stroke-width="0.7"/><text x="394.48" y="5.6" font-family="Liberation Sans" font-size="4.8" fill="#8a8a8a">160</text><path d="M403.12 5.5 V8.6" stroke="#dcdcdc" stroke-width="0.7"/><path d="M412.96 0.3 V8.6" stroke="#e2e2e2" stroke-width="0.7"/><text x="414.16" y="5.6" font-family="Liberation Sans" font-size="4.8" fill="#8a8a8a">170</text><path d="M422.80 5.5 V8.6" stroke="#dcdcdc" stroke-width="0.7"/><path d="M432.64 0.3 V8.6" stroke="#e2e2e2" stroke-width="0.7"/><text x="433.84" y="5.6" font-family="Liberation Sans" font-size="4.8" fill="#8a8a8a">180</text><path d="M442.48 5.5 V8.6" stroke="#dcdcdc" stroke-width="0.7"/><path d="M452.32 0.3 V8.6" stroke="#e2e2e2" stroke-width="0.7"/><text x="453.52" y="5.6" font-family="Liberation Sans" font-size="4.8" fill="#8a8a8a">190</text><path d="M462.16 5.5 V8.6" stroke="#dcdcdc" stroke-width="0.7"/><path d="M472.00 0.3 V8.6" stroke="#e2e2e2" stroke-width="0.7"/><text x="473.20" y="5.6" font-family="Liberation Sans" font-size="4.8" fill="#8a8a8a">200</text><path d="M481.84 5.5 V8.6" stroke="#dcdcdc" stroke-width="0.7"/><path d="M491.68 0.3 V8.6" stroke="#e2e2e2" stroke-width="0.7"/><text x="492.88" y="5.6" font-family="Liberation Sans" font-size="4.8" fill="#8a8a8a">210</text><path d="M501.52 5.5 V8.6" stroke="#dcdcdc" stroke-width="0.7"/><path d="M511.36 0.3 V8.6" stroke="#e2e2e2" stroke-width="0.7"/><text x="512.56" y="5.6" font-family="Liberation Sans" font-size="4.8" fill="#8a8a8a">220</text><path d="M521.20 5.5 V8.6" stroke="#dcdcdc" stroke-width="0.7"/><path d="M531.04 0.3 V8.6" stroke="#e2e2e2" stroke-width="0.7"/><text x="532.24" y="5.6" font-family="Liberation Sans" font-size="4.8" fill="#8a8a8a">230</text><path d="M540.88 5.5 V8.6" stroke="#dcdcdc" stroke-width="0.7"/><path d="M550.72 0.3 V8.6" stroke="#e2e2e2" stroke-width="0.7"/><text x="551.92" y="5.6" font-family="Liberation Sans" font-size="4.8" fill="#8a8a8a">240</text><path d="M560.56 5.5 V8.6" stroke="#dcdcdc" stroke-width="0.7"/><path d="M570.40 0.3 V8.6" stroke="#e2e2e2" stroke-width="0.7"/><text x="571.60" y="5.6" font-family="Liberation Sans" font-size="4.8" fill="#8a8a8a">250</text><path d="M580.24 5.5 V8.6" stroke="#dcdcdc" stroke-width="0.7"/><path d="M590.08 0.3 V8.6" stroke="#e2e2e2" stroke-width="0.7"/><text x="591.28" y="5.6" font-family="Liberation Sans" font-size="4.8" fill="#8a8a8a">260</text><path d="M599.92 5.5 V8.6" stroke="#dcdcdc" stroke-width="0.7"/><path d="M609.76 0.3 V8.6" stroke="#e2e2e2" stroke-width="0.7"/><text x="610.96" y="5.6" font-family="Liberation Sans" font-size="4.8" fill="#8a8a8a">270</text><path d="M619.60 5.5 V8.6" stroke="#dcdcdc" stroke-width="0.7"/></svg>
<div style="position:absolute;left:208px;top:90.1px;width:620px;height:0.5px;background:#e6e6e6"></div>
<svg style="left:199px;top:90px" width="9" height="418" viewBox="0 0 9 418"><path d="M0 3.26 H9" stroke="#e2e2e2" stroke-width="0.7"/><text transform="translate(5.4 4.06) rotate(-90)" text-anchor="end" font-family="Liberation Sans" font-size="4.8" fill="#8a8a8a">-30</text><path d="M6 13.10 H9" stroke="#dcdcdc" stroke-width="0.7"/><path d="M0 22.94 H9" stroke="#e2e2e2" stroke-width="0.7"/><text transform="translate(5.4 23.74) rotate(-90)" text-anchor="end" font-family="Liberation Sans" font-size="4.8" fill="#8a8a8a">-20</text><path d="M6 32.78 H9" stroke="#dcdcdc" stroke-width="0.7"/><path d="M0 42.62 H9" stroke="#e2e2e2" stroke-width="0.7"/><text transform="translate(5.4 43.42) rotate(-90)" text-anchor="end" font-family="Liberation Sans" font-size="4.8" fill="#8a8a8a">-10</text><path d="M6 52.46 H9" stroke="#dcdcdc" stroke-width="0.7"/><path d="M0 62.30 H9" stroke="#e2e2e2" stroke-width="0.7"/><text transform="translate(5.4 63.10) rotate(-90)" text-anchor="end" font-family="Liberation Sans" font-size="4.8" fill="#8a8a8a">0</text><path d="M6 72.14 H9" stroke="#dcdcdc" stroke-width="0.7"/><path d="M0 81.98 H9" stroke="#e2e2e2" stroke-width="0.7"/><text transform="translate(5.4 82.78) rotate(-90)" text-anchor="end" font-family="Liberation Sans" font-size="4.8" fill="#8a8a8a">10</text><path d="M6 91.82 H9" stroke="#dcdcdc" stroke-width="0.7"/><path d="M0 101.66 H9" stroke="#e2e2e2" stroke-width="0.7"/><text transform="translate(5.4 102.46) rotate(-90)" text-anchor="end" font-family="Liberation Sans" font-size="4.8" fill="#8a8a8a">20</text><path d="M6 111.50 H9" stroke="#dcdcdc" stroke-width="0.7"/><path d="M0 121.34 H9" stroke="#e2e2e2" stroke-width="0.7"/><text transform="translate(5.4 122.14) rotate(-90)" text-anchor="end" font-family="Liberation Sans" font-size="4.8" fill="#8a8a8a">30</text><path d="M6 131.18 H9" stroke="#dcdcdc" stroke-width="0.7"/><path d="M0 141.02 H9" stroke="#e2e2e2" stroke-width="0.7"/><text transform="translate(5.4 141.82) rotate(-90)" text-anchor="end" font-family="Liberation Sans" font-size="4.8" fill="#8a8a8a">40</text><path d="M6 150.86 H9" stroke="#dcdcdc" stroke-width="0.7"/><path d="M0 160.70 H9" stroke="#e2e2e2" stroke-width="0.7"/><text transform="translate(5.4 161.50) rotate(-90)" text-anchor="end" font-family="Liberation Sans" font-size="4.8" fill="#8a8a8a">50</text><path d="M6 170.54 H9" stroke="#dcdcdc" stroke-width="0.7"/><path d="M0 180.38 H9" stroke="#e2e2e2" stroke-width="0.7"/><text transform="translate(5.4 181.18) rotate(-90)" text-anchor="end" font-family="Liberation Sans" font-size="4.8" fill="#8a8a8a">60</text><path d="M6 190.22 H9" stroke="#dcdcdc" stroke-width="0.7"/><path d="M0 200.06 H9" stroke="#e2e2e2" stroke-width="0.7"/><text transform="translate(5.4 200.86) rotate(-90)" text-anchor="end" font-family="Liberation Sans" font-size="4.8" fill="#8a8a8a">70</text><path d="M6 209.90 H9" stroke="#dcdcdc" stroke-width="0.7"/><path d="M0 219.74 H9" stroke="#e2e2e2" stroke-width="0.7"/><text transform="translate(5.4 220.54) rotate(-90)" text-anchor="end" font-family="Liberation Sans" font-size="4.8" fill="#8a8a8a">80</text><path d="M6 229.58 H9" stroke="#dcdcdc" stroke-width="0.7"/><path d="M0 239.42 H9" stroke="#e2e2e2" stroke-width="0.7"/><text transform="translate(5.4 240.22) rotate(-90)" text-anchor="end" font-family="Liberation Sans" font-size="4.8" fill="#8a8a8a">90</text><path d="M6 249.26 H9" stroke="#dcdcdc" stroke-width="0.7"/><path d="M0 259.10 H9" stroke="#e2e2e2" stroke-width="0.7"/><text transform="translate(5.4 259.90) rotate(-90)" text-anchor="end" font-family="Liberation Sans" font-size="4.8" fill="#8a8a8a">100</text><path d="M6 268.94 H9" stroke="#dcdcdc" stroke-width="0.7"/><path d="M0 278.78 H9" stroke="#e2e2e2" stroke-width="0.7"/><text transform="translate(5.4 279.58) rotate(-90)" text-anchor="end" font-family="Liberation Sans" font-size="4.8" fill="#8a8a8a">110</text><path d="M6 288.62 H9" stroke="#dcdcdc" stroke-width="0.7"/><path d="M0 298.46 H9" stroke="#e2e2e2" stroke-width="0.7"/><text transform="translate(5.4 299.26) rotate(-90)" text-anchor="end" font-family="Liberation Sans" font-size="4.8" fill="#8a8a8a">120</text><path d="M6 308.30 H9" stroke="#dcdcdc" stroke-width="0.7"/><path d="M0 318.14 H9" stroke="#e2e2e2" stroke-width="0.7"/><text transform="translate(5.4 318.94) rotate(-90)" text-anchor="end" font-family="Liberation Sans" font-size="4.8" fill="#8a8a8a">130</text><path d="M6 327.98 H9" stroke="#dcdcdc" stroke-width="0.7"/><path d="M0 337.82 H9" stroke="#e2e2e2" stroke-width="0.7"/><text transform="translate(5.4 338.62) rotate(-90)" text-anchor="end" font-family="Liberation Sans" font-size="4.8" fill="#8a8a8a">140</text><path d="M6 347.66 H9" stroke="#dcdcdc" stroke-width="0.7"/><path d="M0 357.50 H9" stroke="#e2e2e2" stroke-width="0.7"/><text transform="translate(5.4 358.30) rotate(-90)" text-anchor="end" font-family="Liberation Sans" font-size="4.8" fill="#8a8a8a">150</text><path d="M6 367.34 H9" stroke="#dcdcdc" stroke-width="0.7"/><path d="M0 377.18 H9" stroke="#e2e2e2" stroke-width="0.7"/><text transform="translate(5.4 377.98) rotate(-90)" text-anchor="end" font-family="Liberation Sans" font-size="4.8" fill="#8a8a8a">160</text><path d="M6 387.02 H9" stroke="#dcdcdc" stroke-width="0.7"/><path d="M0 396.86 H9" stroke="#e2e2e2" stroke-width="0.7"/><text transform="translate(5.4 397.66) rotate(-90)" text-anchor="end" font-family="Liberation Sans" font-size="4.8" fill="#8a8a8a">170</text><path d="M6 406.70 H9" stroke="#dcdcdc" stroke-width="0.7"/><path d="M0 416.54 H9" stroke="#e2e2e2" stroke-width="0.7"/><text transform="translate(5.4 417.34) rotate(-90)" text-anchor="end" font-family="Liberation Sans" font-size="4.8" fill="#8a8a8a">180</text></svg>
<div style="position:absolute;left:207.6px;top:90px;width:0.5px;height:418px;background:#e6e6e6"></div>
<div style="position:absolute;left:285.8px;top:151.8px;width:393.6px;height:296.2px;background:#d2d2d2"></div>
<div style="position:absolute;left:286.6px;top:152.6px;width:392px;height:294.4px;background:#ffffff"></div>
<svg style="left:292.3px;top:158.3px" width="380.49999999999994" height="284.2" viewBox="0 0 380.49999999999994 284.2"><rect x="0" y="0" width="380.50" height="284.20" fill="none" stroke="#e2e2e2" stroke-width="0.8"/><path d="M4.00 0 V284.20" stroke="#e2e2e2" stroke-width="0.8"/><path d="M14.12 0 V284.20" stroke="#e2e2e2" stroke-width="0.8"/><path d="M24.24 0 V284.20" stroke="#e2e2e2" stroke-width="0.8"/><path d="M34.36 0 V284.20" stroke="#e2e2e2" stroke-width="0.8"/><path d="M44.48 0 V284.20" stroke="#e2e2e2" stroke-width="0.8"/><path d="M54.60 0 V284.20" stroke="#e2e2e2" stroke-width="0.8"/><path d="M64.72 0 V284.20" stroke="#e2e2e2" stroke-width="0.8"/><path d="M74.84 0 V284.20" stroke="#e2e2e2" stroke-width="0.8"/><path d="M84.96 0 V284.20" stroke="#e2e2e2" stroke-width="0.8"/><path d="M95.08 0 V284.20" stroke="#e2e2e2" stroke-width="0.8"/><path d="M105.20 0 V284.20" stroke="#e2e2e2" stroke-width="0.8"/><path d="M115.32 0 V284.20" stroke="#e2e2e2" stroke-width="0.8"/><path d="M125.44 0 V284.20" stroke="#e2e2e2" stroke-width="0.8"/><path d="M135.56 0 V284.20" stroke="#e2e2e2" stroke-width="0.8"/><path d="M145.68 0 V284.20" stroke="#e2e2e2" stroke-width="0.8"/><path d="M155.80 0 V284.20" stroke="#e2e2e2" stroke-width="0.8"/><path d="M165.92 0 V284.20" stroke="#e2e2e2" stroke-width="0.8"/><path d="M176.04 0 V284.20" stroke="#e2e2e2" stroke-width="0.8"/><path d="M186.16 0 V284.20" stroke="#e2e2e2" stroke-width="0.8"/><path d="M196.28 0 V284.20" stroke="#e2e2e2" stroke-width="0.8"/><path d="M206.40 0 V284.20" stroke="#e2e2e2" stroke-width="0.8"/><path d="M216.52 0 V284.20" stroke="#e2e2e2" stroke-width="0.8"/><path d="M226.64 0 V284.20" stroke="#e2e2e2" stroke-width="0.8"/><path d="M236.76 0 V284.20" stroke="#e2e2e2" stroke-width="0.8"/><path d="M246.88 0 V284.20" stroke="#e2e2e2" stroke-width="0.8"/><path d="M257.00 0 V284.20" stroke="#e2e2e2" stroke-width="0.8"/><path d="M267.12 0 V284.20" stroke="#e2e2e2" stroke-width="0.8"/><path d="M277.24 0 V284.20" stroke="#e2e2e2" stroke-width="0.8"/><path d="M287.36 0 V284.20" stroke="#e2e2e2" stroke-width="0.8"/><path d="M297.48 0 V284.20" stroke="#e2e2e2" stroke-width="0.8"/><path d="M307.60 0 V284.20" stroke="#e2e2e2" stroke-width="0.8"/><path d="M317.72 0 V284.20" stroke="#e2e2e2" stroke-width="0.8"/><path d="M327.84 0 V284.20" stroke="#e2e2e2" stroke-width="0.8"/><path d="M337.96 0 V284.20" stroke="#e2e2e2" stroke-width="0.8"/><path d="M348.08 0 V284.20" stroke="#e2e2e2" stroke-width="0.8"/><path d="M358.20 0 V284.20" stroke="#e2e2e2" stroke-width="0.8"/><path d="M368.32 0 V284.20" stroke="#e2e2e2" stroke-width="0.8"/><path d="M378.44 0 V284.20" stroke="#e2e2e2" stroke-width="0.8"/><path d="M0 4.00 H380.50" stroke="#e2e2e2" stroke-width="0.8"/><path d="M0 14.20 H380.50" stroke="#e2e2e2" stroke-width="0.8"/><path d="M0 24.40 H380.50" stroke="#e2e2e2" stroke-width="0.8"/><path d="M0 34.60 H380.50" stroke="#e2e2e2" stroke-width="0.8"/><path d="M0 44.80 H380.50" stroke="#e2e2e2" stroke-width="0.8"/><path d="M0 55.00 H380.50" stroke="#e2e2e2" stroke-width="0.8"/><path d="M0 65.20 H380.50" stroke="#e2e2e2" stroke-width="0.8"/><path d="M0 75.40 H380.50" stroke="#e2e2e2" stroke-width="0.8"/><path d="M0 85.60 H380.50" stroke="#e2e2e2" stroke-width="0.8"/><path d="M0 95.80 H380.50" stroke="#e2e2e2" stroke-width="0.8"/><path d="M0 106.00 H380.50" stroke="#e2e2e2" stroke-width="0.8"/><path d="M0 116.20 H380.50" stroke="#e2e2e2" stroke-width="0.8"/><path d="M0 126.40 H380.50" stroke="#e2e2e2" stroke-width="0.8"/><path d="M0 136.60 H380.50" stroke="#e2e2e2" stroke-width="0.8"/><path d="M0 146.80 H380.50" stroke="#e2e2e2" stroke-width="0.8"/><path d="M0 157.00 H380.50" stroke="#e2e2e2" stroke-width="0.8"/><path d="M0 167.20 H380.50" stroke="#e2e2e2" stroke-width="0.8"/><path d="M0 177.40 H380.50" stroke="#e2e2e2" stroke-width="0.8"/><path d="M0 187.60 H380.50" stroke="#e2e2e2" stroke-width="0.8"/><path d="M0 197.80 H380.50" stroke="#e2e2e2" stroke-width="0.8"/><path d="M0 208.00 H380.50" stroke="#e2e2e2" stroke-width="0.8"/><path d="M0 218.20 H380.50" stroke="#e2e2e2" stroke-width="0.8"/><path d="M0 228.40 H380.50" stroke="#e2e2e2" stroke-width="0.8"/><path d="M0 238.60 H380.50" stroke="#e2e2e2" stroke-width="0.8"/><path d="M0 248.80 H380.50" stroke="#e2e2e2" stroke-width="0.8"/><path d="M0 259.00 H380.50" stroke="#e2e2e2" stroke-width="0.8"/><path d="M0 269.20 H380.50" stroke="#e2e2e2" stroke-width="0.8"/><path d="M0 279.40 H380.50" stroke="#e2e2e2" stroke-width="0.8"/></svg>
<svg style="left:286px;top:152px" width="394" height="296" viewBox="286 152 394 296"><rect x="307.1" y="226.5" width="103.5" height="199.6" rx="0" stroke="#555" stroke-width="0.9" fill="#b9b9b9"/><rect x="307.1" y="172.6" width="243.2" height="53.9" fill="#fff"/><rect x="511.4" y="172.5" width="38.9" height="74.8" fill="#fff"/><path d="M511.4 247.3 L481.8 266.2 H580 L550.3 247.3 Z" fill="#fff"/><path d="M307.1 172.6 L348.3 199.55 L307.1 226.5" stroke="#a0a0a0" stroke-width="0.65" stroke-dasharray="3.2 2" fill="none"/><path d="M389.4 172.6 L348.3 199.55 L389.4 226.5" stroke="#a0a0a0" stroke-width="0.65" stroke-dasharray="3.2 2" fill="none"/><path d="M389.4 172.6 L430.4 199.55 L389.4 226.5" stroke="#a0a0a0" stroke-width="0.65" stroke-dasharray="3.2 2" fill="none"/><path d="M471.3 172.6 L430.4 199.55 L471.3 226.5" stroke="#a0a0a0" stroke-width="0.65" stroke-dasharray="3.2 2" fill="none"/><path d="M471.3 172.6 L511.4 199.55 L471.3 226.5" stroke="#a0a0a0" stroke-width="0.65" stroke-dasharray="3.2 2" fill="none"/><path d="M307.1 199.5 H511.4" stroke="#a0a0a0" stroke-width="0.65" stroke-dasharray="3.2 2" fill="none"/><rect x="307.1" y="172.6" width="204.3" height="53.900000000000006" rx="0" stroke="#404040" stroke-width="1.0" fill="none"/><path d="M348.3 172.6 L348.3 226.5" stroke="#404040" stroke-width="0.9" fill="none"/><path d="M389.4 172.6 L389.4 226.5" stroke="#404040" stroke-width="0.9" fill="none"/><path d="M430.4 172.6 L430.4 226.5" stroke="#404040" stroke-width="0.9" fill="none"/><path d="M471.3 172.6 L471.3 226.5" stroke="#404040" stroke-width="0.9" fill="none"/><path d="M511.4 172.5 L511.4 247.3" stroke="#404040" stroke-width="0.9" fill="none"/><rect x="511.4" y="172.5" width="38.9" height="74.8" rx="0" stroke="#404040" stroke-width="0.9" fill="none"/><path d="M511.4 203.3 L550.3 203.3" stroke="#404040" stroke-width="0.9" fill="none"/><ellipse cx="531" cy="218.9" rx="9.9" ry="3.3" stroke="#404040" stroke-width="0.8" fill="none"/><path d="M511.4 247.3 L481.8 266.2 M550.3 247.3 L580 266.2" stroke="#404040" stroke-width="0.9" fill="none"/><path d="M510.5 249 L489.9 266.2 M551 249.5 L572.3 266.2" stroke="#404040" stroke-width="0.7" fill="none"/><path d="M511.4 247.3 L550.3 247.3" stroke="#404040" stroke-width="0.9" fill="none"/><rect x="481.8" y="266.2" width="98.2" height="4.8" rx="0.8" stroke="#404040" stroke-width="0.9" fill="#fff"/><circle cx="493.50" cy="268.6" r="1.3" stroke="#555" stroke-width="0.5" fill="none"/><circle cx="496.70" cy="268.6" r="1.3" stroke="#555" stroke-width="0.5" fill="none"/><circle cx="499.90" cy="268.6" r="1.3" stroke="#555" stroke-width="0.5" fill="none"/><circle cx="503.10" cy="268.6" r="1.3" stroke="#555" stroke-width="0.5" fill="none"/><circle cx="506.30" cy="268.6" r="1.3" stroke="#555" stroke-width="0.5" fill="none"/><rect x="583.5" y="266.4" width="74" height="4.8" rx="0.8" stroke="#404040" stroke-width="0.9" fill="#fff"/><text transform="translate(417 326) rotate(-90)" font-family="Liberation Sans" font-size="8.3" fill="#484848" text-anchor="middle" dominant-baseline="central">1030 mm</text><rect x="411" y="339.5" width="246.4" height="87" fill="#fff"/><rect x="411" y="339.7" width="73.2" height="1.7" rx="0" stroke="#404040" stroke-width="0.8" fill="none"/><path d="M411 341.4 L447.4 383.79999999999995 L411 426.2" stroke="#a0a0a0" stroke-width="0.65" stroke-dasharray="3.2 2" fill="none"/><path d="M484.2 341.4 L447.4 383.79999999999995 L484.2 426.2" stroke="#a0a0a0" stroke-width="0.65" stroke-dasharray="3.2 2" fill="none"/><path d="M411 383 H484.2" stroke="#a0a0a0" stroke-width="0.65" stroke-dasharray="3.2 2" fill="none"/><rect x="411" y="339.7" width="73.2" height="86.5" rx="0" stroke="#404040" stroke-width="1.0" fill="none"/><path d="M447.4 341.4 L447.4 426.2" stroke="#404040" stroke-width="0.9" fill="none"/><rect x="484.2" y="339.5" width="99.1" height="86.5" rx="0" stroke="#404040" stroke-width="1.0" fill="none"/><path d="M484.2 347.9 L583.3 347.9" stroke="#404040" stroke-width="0.7" fill="none"/><path d="M484.2 350.3 L583.3 350.3" stroke="#404040" stroke-width="0.7" fill="none"/><path d="M484.2 392.5 L583.3 392.5" stroke="#404040" stroke-width="1.0" fill="none"/><circle cx="497" cy="356" r="2.5" stroke="#404040" stroke-width="0.75" fill="none"/><path d="M493.9 356 H500.1 M497 352.9 V359.1" stroke="#404040" stroke-width="0.65"/><circle cx="507.4" cy="356" r="2.5" stroke="#404040" stroke-width="0.75" fill="none"/><path d="M504.29999999999995 356 H510.5 M507.4 352.9 V359.1" stroke="#404040" stroke-width="0.65"/><circle cx="517.1" cy="356" r="2.5" stroke="#404040" stroke-width="0.75" fill="none"/><path d="M514.0 356 H520.2 M517.1 352.9 V359.1" stroke="#404040" stroke-width="0.65"/><circle cx="527.2" cy="356" r="2.5" stroke="#404040" stroke-width="0.75" fill="none"/><path d="M524.1 356 H530.3000000000001 M527.2 352.9 V359.1" stroke="#404040" stroke-width="0.65"/><rect x="552.2" y="352.9" width="15.6" height="5.8" rx="0.8" stroke="#404040" stroke-width="0.7" fill="none"/><path d="M556.2 352.9 L556.2 358.7" stroke="#404040" stroke-width="0.6" fill="none"/><path d="M560.2 352.9 L560.2 358.7" stroke="#404040" stroke-width="0.6" fill="none"/><path d="M564.2 352.9 L564.2 358.7" stroke="#404040" stroke-width="0.6" fill="none"/><rect x="497.7" y="365.3" width="72.8" height="2.5" rx="1.2" stroke="#404040" stroke-width="0.7" fill="none"/><rect x="497" y="370.6" width="74.8" height="18.3" rx="0.8" stroke="#404040" stroke-width="0.8" fill="none"/><rect x="498.6" y="372" width="71.6" height="15.5" rx="0" stroke="#404040" stroke-width="0.6" fill="none"/><rect x="497.7" y="394.9" width="72.8" height="2.7" rx="1.2" stroke="#404040" stroke-width="0.7" fill="none"/><rect x="497" y="400.4" width="74.8" height="18.3" rx="0.8" stroke="#404040" stroke-width="0.8" fill="none"/><rect x="498.6" y="401.8" width="71.6" height="15.5" rx="0" stroke="#404040" stroke-width="0.6" fill="none"/><path d="M584.2 339.5 L620.5 383.0 L584.2 426.5" stroke="#a0a0a0" stroke-width="0.65" stroke-dasharray="3.2 2" fill="none"/><path d="M657.4 339.5 L620.5 383.0 L657.4 426.5" stroke="#a0a0a0" stroke-width="0.65" stroke-dasharray="3.2 2" fill="none"/><path d="M584.2 383.3 H657.4" stroke="#a0a0a0" stroke-width="0.65" stroke-dasharray="3.2 2" fill="none"/><rect x="584.2" y="339.5" width="73.2" height="87.0" rx="0" stroke="#404040" stroke-width="1.0" fill="none"/><path d="M620.5 339.5 L620.5 426.5" stroke="#404040" stroke-width="0.9" fill="none"/><text x="348.3" y="167.2" font-family="Liberation Sans" font-size="8.3" fill="#484848" text-anchor="middle" dominant-baseline="central">840 mm</text><text x="430.3" y="167.2" font-family="Liberation Sans" font-size="8.3" fill="#484848" text-anchor="middle" dominant-baseline="central">840 mm</text><text x="491.5" y="167.2" font-family="Liberation Sans" font-size="8.3" fill="#484848" text-anchor="middle" dominant-baseline="central">400 mm</text><text x="531" y="167.2" font-family="Liberation Sans" font-size="8.3" fill="#484848" text-anchor="middle" dominant-baseline="central">1000 mm</text><text transform="translate(517.4 199) rotate(-90)" font-family="Liberation Sans" font-size="8.3" fill="#484848" text-anchor="middle" dominant-baseline="central">550 mm</text><text transform="translate(586.2 221) rotate(-90)" font-family="Liberation Sans" font-size="8.3" fill="#484848" text-anchor="middle" dominant-baseline="central">1000 mm</text><text x="620.3" y="261.8" font-family="Liberation Sans" font-size="8.3" fill="#484848" text-anchor="middle" dominant-baseline="central">750 mm</text><text transform="translate(663.2 268.3) rotate(-90)" font-family="Liberation Sans" font-size="8.3" fill="#484848" text-anchor="middle" dominant-baseline="central">40 mm</text><text transform="translate(313.9 337) rotate(-90)" font-family="Liberation Sans" font-size="8.3" fill="#333" text-anchor="middle" dominant-baseline="central">2030mm</text><text x="447.3" y="334.6" font-family="Liberation Sans" font-size="8.3" fill="#484848" text-anchor="middle" dominant-baseline="central">740 mm</text><text x="534.2" y="334.6" font-family="Liberation Sans" font-size="8.3" fill="#484848" text-anchor="middle" dominant-baseline="central">1000 mm</text><text x="620.3" y="334.4" font-family="Liberation Sans" font-size="8.3" fill="#484848" text-anchor="middle" dominant-baseline="central">750 mm</text><text transform="translate(490.5 341) rotate(-90)" font-family="Liberation Sans" font-size="8.3" fill="#484848" text-anchor="middle" dominant-baseline="central">20 mm</text><text transform="translate(663.5 340) rotate(-90)" font-family="Liberation Sans" font-size="8.3" fill="#484848" text-anchor="middle" dominant-baseline="central">20 mm</text><text transform="translate(663.5 382.7) rotate(-90)" font-family="Liberation Sans" font-size="8.3" fill="#484848" text-anchor="middle" dominant-baseline="central">880 mm</text></svg>
<div style="position:absolute;left:827.8px;top:90px;width:6px;height:418px;background:#eeeeee"></div>
<div style="position:absolute;left:828.4px;top:129.8px;width:4.3px;height:320px;background:#c2c2c2;border-radius:2.2px"></div>
<div style="position:absolute;left:208px;top:508px;width:620px;height:5px;background:#f0f0f0"></div>
<div style="position:absolute;left:335px;top:508px;width:392.5px;height:4.8px;background:#c2c2c2;border-radius:2.4px"></div>
<div style="position:absolute;left:827.8px;top:508px;width:6px;height:5px;background:#e0e0e0"></div>
<div style="position:absolute;left:834px;top:68px;width:1px;height:454px;background:#e3e3e3"></div>
<div style="position:absolute;left:208px;top:513px;width:626px;height:9px;background:#f7f7f7"></div>
<svg style="left:208px;top:513px" width="626" height="9"><rect x="76.00" y="1.6" width="6.2" height="7" fill="#e04040"/><rect x="82.80" y="1.6" width="6.2" height="7" fill="#f06030"/><rect x="89.60" y="1.6" width="6.2" height="7" fill="#f08a30"/><rect x="96.40" y="1.6" width="6.2" height="7" fill="#f5a030"/><rect x="103.20" y="1.6" width="6.2" height="7" fill="#f9b84a"/><rect x="110.00" y="1.6" width="6.20" height="7" fill="#13917a"/><rect x="116.80" y="1.6" width="6.20" height="7" fill="#1fb095"/><rect x="123.60" y="1.6" width="6.20" height="7" fill="#20c9a9"/><rect x="130.40" y="1.6" width="6.20" height="7" fill="#5cd6c0"/><rect x="137.20" y="1.6" width="6.20" height="7" fill="#80e3d2"/><rect x="144.00" y="1.6" width="6.20" height="7" fill="#9c2d62"/><rect x="150.80" y="1.6" width="6.20" height="7" fill="#c24a88"/><rect x="157.60" y="1.6" width="6.20" height="7" fill="#e064a6"/><rect x="164.40" y="1.6" width="6.20" height="7" fill="#f68cc8"/><rect x="171.20" y="1.6" width="6.20" height="7" fill="#f4c0dc"/><rect x="178.00" y="1.6" width="6.20" height="7" fill="#5e8c1a"/><rect x="184.80" y="1.6" width="6.20" height="7" fill="#6b9f2a"/><rect x="191.60" y="1.6" width="6.20" height="7" fill="#8fb826"/><rect x="198.40" y="1.6" width="6.20" height="7" fill="#aacb4c"/><rect x="205.20" y="1.6" width="6.20" height="7" fill="#cfe09a"/><rect x="212.00" y="1.6" width="6.20" height="7" fill="#1f2fb0"/><rect x="218.80" y="1.6" width="6.20" height="7" fill="#2e52d0"/><rect x="225.60" y="1.6" width="6.20" height="7" fill="#6a45ea"/><rect x="232.40" y="1.6" width="6.20" height="7" fill="#8a72f0"/><rect x="239.20" y="1.6" width="6.20" height="7" fill="#a58cf2"/><rect x="246.00" y="1.6" width="6.20" height="7" fill="#fccc1e"/><rect x="252.80" y="1.6" width="6.20" height="7" fill="#f8d52a"/><rect x="259.60" y="1.6" width="6.20" height="7" fill="#f5da2e"/><rect x="266.40" y="1.6" width="6.20" height="7" fill="#f5e040"/><rect x="273.20" y="1.6" width="6.20" height="7" fill="#fcfc80"/><rect x="280.00" y="1.6" width="6.20" height="7" fill="#8e4ed8"/><rect x="286.80" y="1.6" width="6.20" height="7" fill="#b44ee0"/><rect x="293.60" y="1.6" width="6.20" height="7" fill="#d86cf0"/><rect x="300.40" y="1.6" width="6.20" height="7" fill="#c08af5"/><rect x="307.20" y="1.6" width="6.20" height="7" fill="#dca8f8"/><rect x="314.00" y="1.6" width="6.20" height="7" fill="#2e7d45"/><rect x="320.80" y="1.6" width="6.20" height="7" fill="#3a9a58"/><rect x="327.60" y="1.6" width="6.20" height="7" fill="#4aae6a"/><rect x="334.40" y="1.6" width="6.20" height="7" fill="#60bb85"/><rect x="341.20" y="1.6" width="6.20" height="7" fill="#8cd0a8"/><rect x="348.00" y="1.6" width="6.20" height="7" fill="#e8323c"/><rect x="354.80" y="1.6" width="6.20" height="7" fill="#ef4c52"/><rect x="361.60" y="1.6" width="6.20" height="7" fill="#f06a70"/><rect x="368.40" y="1.6" width="6.20" height="7" fill="#f28a8c"/><rect x="375.20" y="1.6" width="6.20" height="7" fill="#f5a0a0"/><rect x="382.00" y="1.6" width="6.20" height="7" fill="#2a40a0"/><rect x="388.80" y="1.6" width="6.20" height="7" fill="#2d55cc"/><rect x="395.60" y="1.6" width="6.20" height="7" fill="#3a78ee"/><rect x="402.40" y="1.6" width="6.20" height="7" fill="#5a90f8"/><rect x="409.20" y="1.6" width="6.20" height="7" fill="#88b0f5"/><rect x="416.00" y="1.6" width="6.20" height="7" fill="#7a3410"/><rect x="422.80" y="1.6" width="6.20" height="7" fill="#983810"/><rect x="429.60" y="1.6" width="6.20" height="7" fill="#b0422a"/><rect x="436.40" y="1.6" width="6.20" height="7" fill="#c86048"/><rect x="443.20" y="1.6" width="6.20" height="7" fill="#e07050"/><rect x="450.00" y="1.6" width="6.20" height="7" fill="#1a80d8"/><rect x="456.80" y="1.6" width="6.20" height="7" fill="#2e90ea"/><rect x="463.60" y="1.6" width="6.20" height="7" fill="#40a8f0"/><rect x="470.40" y="1.6" width="6.20" height="7" fill="#50d0f8"/><rect x="477.20" y="1.6" width="6.20" height="7" fill="#58d0f8"/><rect x="484.00" y="1.6" width="6.20" height="7" fill="#7a4a32"/><rect x="490.80" y="1.6" width="6.20" height="7" fill="#925e40"/><rect x="497.60" y="1.6" width="6.20" height="7" fill="#b06a4e"/><rect x="504.40" y="1.6" width="6.20" height="7" fill="#d8825a"/><rect x="511.20" y="1.6" width="6.20" height="7" fill="#f5965e"/><rect x="518.00" y="1.6" width="6.20" height="7" fill="#857870"/><rect x="524.80" y="1.6" width="6.20" height="7" fill="#a8a290"/><rect x="531.60" y="1.6" width="6.20" height="7" fill="#cbc3b0"/><rect x="538.40" y="1.6" width="6.20" height="7" fill="#e5ddd0"/><rect x="545.20" y="1.6" width="6.20" height="7" fill="#f5efd8"/><rect x="552.00" y="1.6" width="6.20" height="7" fill="#1a1a1a"/><rect x="558.80" y="1.6" width="6.20" height="7" fill="#333333"/><rect x="565.60" y="1.6" width="6.20" height="7" fill="#444444"/><rect x="572.40" y="1.6" width="6.20" height="7" fill="#5a5a5a"/><rect x="579.20" y="1.6" width="6.20" height="7" fill="#6e6e6e"/><rect x="586.00" y="1.6" width="6.20" height="7" fill="#aaaaaa"/><rect x="592.80" y="1.6" width="6.20" height="7" fill="#c0c0c0"/><rect x="599.60" y="1.6" width="6.20" height="7" fill="#d5d5d5"/><rect x="606.40" y="1.6" width="6.20" height="7" fill="#e5e5e5"/><rect x="613.20" y="1.6" width="6.20" height="7" fill="#eeeeee"/><rect x="620.00" y="1.6" width="6.00" height="7" fill="#ffffff"/></svg>
<svg style="left:840px;top:73.5px" width="8" height="7" viewBox="0 0 8 7"><path d="M0.8 0.6 L3.6 3.4 L0.8 6.2 M4.2 0.6 L7 3.4 L4.2 6.2" fill="none" stroke="#888" stroke-width="0.7"/></svg>
<div style="position:absolute;left:834.3px;top:85.1px;width:18.5px;height:18.4px;background:#0f7ff5"></div>
<svg style="left:838.5px;top:88.5px" width="11" height="11" viewBox="0 0 11 11"><path d="M1.2 5.2 L4.8 1.6 L8.6 5.4 L5 9 Z" fill="none" stroke="#fff" stroke-width="1.1"/><path d="M1.6 5.4 H8.4 L5 8.6 Z" fill="#fff"/><path d="M3.6 0.6 L5.2 2.2" stroke="#fff" stroke-width="1"/><circle cx="9.6" cy="7.8" r="0.8" fill="#fff"/></svg>
<svg style="left:839px;top:113px" width="9" height="9" viewBox="0 0 9 9"><rect x="0.5" y="0.5" width="3.2" height="3.2" rx="0.4" fill="none" stroke="#333" stroke-width="1.05"/><rect x="5.3" y="0.5" width="3.2" height="3.2" rx="0.4" fill="none" stroke="#333" stroke-width="1.05"/><rect x="0.5" y="5.3" width="3.2" height="3.2" rx="0.4" fill="none" stroke="#333" stroke-width="1.05"/><rect x="5.3" y="5.3" width="3.2" height="3.2" rx="0.4" fill="none" stroke="#333" stroke-width="1.05"/></svg>
<svg style="left:839px;top:136.8px" width="9" height="8" viewBox="0 0 9 8"><rect x="0.5" y="0.5" width="8" height="7" fill="none" stroke="#333" stroke-width="1.05"/><path d="M1.5 6.5 L3.5 4.8 L5 5.8 L7.5 4 V6.5 Z" fill="#333"/></svg>
<svg style="left:839px;top:161px" width="9" height="9" viewBox="0 0 9 9"><path d="M4.5 0.6 L8.4 3 L4.5 5.4 L0.6 3 Z" fill="none" stroke="#333" stroke-width="1.05"/><path d="M0.6 5 L4.5 7.4 L8.4 5" fill="none" stroke="#333" stroke-width="1.05"/></svg>
<svg style="left:839.5px;top:182.8px" width="8" height="10" viewBox="0 0 8 10"><path d="M0.6 0.6 H5.2 L7.4 2.8 V9.2 H0.6 Z" fill="none" stroke="#333" stroke-width="1.05"/><path d="M2.2 4.2 H5.8 M2.2 6 H5.8 M2.2 7.8 H5.8" stroke="#333" stroke-width="0.75"/></svg>
<svg style="left:839.5px;top:207px" width="8" height="9" viewBox="0 0 8 9"><path d="M0.6 0.6 H4 V3 H7.4 V8.4 H0.6 Z" fill="none" stroke="#333" stroke-width="1.05"/><path d="M2 5 H4 M5 5.5 V7" stroke="#333" stroke-width="0.8"/></svg>
<svg style="left:839.3px;top:230.5px" width="9" height="9" viewBox="0 0 9 9"><path d="M0.6 2.5 L2.5 0.6 M8.4 2.5 L6.5 0.6 M0.6 6.5 L2.5 8.4 M8.4 6.5 L6.5 8.4 M2.5 2.5 L6.5 6.5 M6.5 2.5 L2.5 6.5" stroke="#333" stroke-width="0.9"/></svg>
<svg style="left:839.3px;top:254px" width="9" height="9" viewBox="0 0 9 9"><path d="M0.6 0.8 H8.4 M1.3 0.8 V6.5 H7.7 V0.8 M4.5 6.5 V8.6 M3.3 2.2 V5.2 L5.6 3.7 Z" fill="none" stroke="#333" stroke-width="1.05"/></svg>
<svg style="left:839.5px;top:277.5px" width="9" height="9" viewBox="0 0 9 9"><path d="M1.2 4.5 A3.4 3.4 0 1 0 2.2 2" fill="none" stroke="#333" stroke-width="1.05"/><path d="M1 0.8 V2.6 H2.8 M4.5 2.8 V4.8 L6 5.8" fill="none" stroke="#333" stroke-width="1.05"/></svg>
<div style="position:absolute;left:853px;top:68px;width:147px;height:454px;background:#f5f5f5"></div>
<div style="position:absolute;left:852px;top:68px;width:1px;height:454px;background:#e0e0e0"></div>
<div style="position:absolute;left:902.3px;top:69px;width:97.7px;height:15.4px;background:#e3e3e3;border-radius:2px 0 0 0"></div>
<div class="t" style="left:777.8px;width:200px;text-align:center;top:74.21px;font-size:7.32px;color:#222;transform:scaleX(0.835);transform-origin:50% 50%;font-weight:bold">Fill</div>
<div class="t" style="left:826.8px;width:200px;text-align:center;top:74.41px;font-size:7.32px;color:#333;transform:scaleX(0.835);transform-origin:50% 50%;">Line</div>
<div class="t" style="left:875.8px;width:200px;text-align:center;top:74.41px;font-size:7.32px;color:#333;transform:scaleX(0.835);transform-origin:50% 50%;">Shadow</div>
<div style="position:absolute;left:863.8px;top:95.3px;width:6px;height:6px;background:#fcfcfc;border-radius:50%"></div>
<div style="position:absolute;left:866px;top:97.5px;width:1.6px;height:1.6px;background:#aaa;border-radius:50%"></div>
<div class="t" style="left:872.9px;top:94.98px;font-size:7.20px;color:#9a9a9a;transform:scaleX(0.835);transform-origin:0 50%;">No fill</div>
<div style="position:absolute;left:863.8px;top:113.55px;width:6px;height:6px;background:#fcfcfc;border-radius:50%"></div>
<div class="t" style="left:872.9px;top:113.23px;font-size:7.20px;color:#9a9a9a;transform:scaleX(0.835);transform-origin:0 50%;">Solid fill</div>
<div style="position:absolute;left:863.8px;top:131.8px;width:6px;height:6px;background:#fcfcfc;border-radius:50%"></div>
<div class="t" style="left:872.9px;top:131.48px;font-size:7.20px;color:#9a9a9a;transform:scaleX(0.835);transform-origin:0 50%;">Gradient fill</div>
<div style="position:absolute;left:863.8px;top:150.05px;width:6px;height:6px;background:#fcfcfc;border-radius:50%"></div>
<div class="t" style="left:872.9px;top:149.73px;font-size:7.20px;color:#9a9a9a;transform:scaleX(0.835);transform-origin:0 50%;">Single color gradient fill</div>
<div style="position:absolute;left:863.8px;top:168.3px;width:6px;height:6px;background:#fcfcfc;border-radius:50%"></div>
<div class="t" style="left:872.9px;top:167.98px;font-size:7.20px;color:#9a9a9a;transform:scaleX(0.835);transform-origin:0 50%;">Pattern fill</div>
<div style="position:absolute;left:863.8px;top:186.55px;width:6px;height:6px;background:#fcfcfc;border-radius:50%"></div>
<div class="t" style="left:872.9px;top:186.23px;font-size:7.20px;color:#9a9a9a;transform:scaleX(0.835);transform-origin:0 50%;">Picture or texture fill</div>
<svg style="left:5.5px;top:527.5px" width="12" height="8" viewBox="0 0 12 8"><path d="M0.6 0.8 V7.2 M11.4 0.8 V7.2" stroke="#444" stroke-width="0.8"/><rect x="2.4" y="1" width="7.2" height="6" fill="none" stroke="#444" stroke-width="1"/></svg>
<div style="position:absolute;left:24px;top:525px;width:0.7px;height:14px;background:#e0e0e0"></div>
<div class="t" style="left:28.5px;top:528.54px;font-size:7.44px;color:#333;transform:scaleX(0.835);transform-origin:0 50%;">Page-1</div>
<svg style="left:78.5px;top:531px" width="4" height="3" viewBox="0 0 4 3"><path d="M0 0.3 L3 0.3 L1.5 1.8 Z" fill="#666"/></svg>
<div style="position:absolute;left:85.6px;top:525px;width:0.7px;height:14px;background:#e0e0e0"></div>
<svg style="left:815.5px;top:528px" width="9" height="8" viewBox="0 0 9 8"><path d="M0.6 2.4 V0.6 H2.4 M6.6 0.6 H8.4 V2.4 M8.4 5.6 V7.4 H6.6 M2.4 7.4 H0.6 V5.6" stroke="#444" stroke-width="0.8" fill="none"/><rect x="2.8" y="2.6" width="3.4" height="2.8" fill="#444"/></svg>
<div class="t" style="left:828px;top:528.68px;font-size:7.20px;color:#333;transform:scaleX(0.835);transform-origin:0 50%;">Focus</div>
<svg style="left:852.5px;top:527.5px" width="9" height="9" viewBox="0 0 9 9"><circle cx="4.5" cy="4.5" r="3.9" fill="none" stroke="#444" stroke-width="0.8"/><path d="M3.4 2.6 V6.4 L6.3 4.5 Z" fill="none" stroke="#444" stroke-width="0.7"/></svg>
<div style="position:absolute;left:867.5px;top:531.6px;width:4.5px;height:0.9px;background:#444"></div>
<div style="position:absolute;left:876px;top:531.6px;width:43px;height:0.9px;background:#d0d0d0"></div>
<div style="position:absolute;left:876px;top:531.6px;width:11px;height:0.9px;background:#999"></div>
<div style="position:absolute;left:884.8px;top:529.4px;width:5.2px;height:5.2px;background:#fff;border:0.8px solid #777;border-radius:50%;box-sizing:border-box"></div>
<svg style="left:921.5px;top:528.5px" width="7" height="7" viewBox="0 0 7 7"><path d="M3.5 0.5 V6.5 M0.5 3.5 H6.5" stroke="#444" stroke-width="0.9"/></svg>
<div class="t" style="left:934.4px;top:528.68px;font-size:7.20px;color:#333;transform:scaleX(0.835);transform-origin:0 50%;">100%</div>
<svg style="left:952.5px;top:531.2px" width="3" height="2" viewBox="0 0 3 2"><path d="M0 0 L2.4 0 L1.2 1.2 Z" fill="#888"/></svg>
<svg style="left:964.2px;top:527.8px" width="9" height="9" viewBox="0 0 9 9"><path d="M0.6 2.6 V0.6 H2.6 M6.4 0.6 H8.4 V2.6 M8.4 6.4 V8.4 H6.4 M2.6 8.4 H0.6 V6.4" stroke="#444" stroke-width="0.9" fill="none"/></svg>
<svg style="left:976.5px;top:527.8px" width="9" height="9" viewBox="0 0 9 9"><rect x="0.6" y="0.6" width="7.8" height="7.8" fill="none" stroke="#444" stroke-width="0.9"/><path d="M2.2 4.5 H6.8 M2.2 3.3 V5.7 M6.8 3.3 V5.7" stroke="#444" stroke-width="0.7"/></svg>
<div class="t" style="left:941px;top:542.74px;font-size:7.44px;color:#f0f0f0;transform:scaleX(0.835);transform-origin:0 50%;">17:20:15</div>
<div style="position:absolute;left:997px;top:542px;width:0.8px;height:5px;background:#666"></div>
<div style="position:absolute;left:6.6px;top:69.5px;width:83.9px;height:293.3px;background:#fafafa;box-shadow:0.3px 1px 3px rgba(0,0,0,0.24)"></div>
<div style="position:absolute;left:8px;top:273.2px;width:79.5px;height:12.1px;background:#ebebeb"></div>
<div class="t" style="left:18.1px;top:75.17px;font-size:7.38px;color:#1a1a1a;transform:scaleX(0.835);transform-origin:0 50%;">My Library</div>
<svg style="left:82.7px;top:76.39999999999999px" width="3" height="5" viewBox="0 0 3 5"><path d="M0 0.2 L2.4 2.2 L0 4.2 Z" fill="#555"/></svg>
<div class="t" style="left:18.1px;top:87.68px;font-size:7.38px;color:#1a1a1a;transform:scaleX(0.835);transform-origin:0 50%;">General</div>
<svg style="left:82.7px;top:88.91px" width="3" height="5" viewBox="0 0 3 5"><path d="M0 0.2 L2.4 2.2 L0 4.2 Z" fill="#555"/></svg>
<div class="t" style="left:18.1px;top:100.19px;font-size:7.38px;color:#1a1a1a;transform:scaleX(0.835);transform-origin:0 50%;">Smart Shapes</div>
<svg style="left:82.7px;top:101.41999999999999px" width="3" height="5" viewBox="0 0 3 5"><path d="M0 0.2 L2.4 2.2 L0 4.2 Z" fill="#555"/></svg>
<div class="t" style="left:18.1px;top:112.70px;font-size:7.38px;color:#1a1a1a;transform:scaleX(0.835);transform-origin:0 50%;">Flowchart</div>
<svg style="left:82.7px;top:113.92999999999999px" width="3" height="5" viewBox="0 0 3 5"><path d="M0 0.2 L2.4 2.2 L0 4.2 Z" fill="#555"/></svg>
<div class="t" style="left:18.1px;top:125.21px;font-size:7.38px;color:#1a1a1a;transform:scaleX(0.835);transform-origin:0 50%;">Mind Map</div>
<svg style="left:82.7px;top:126.43999999999998px" width="3" height="5" viewBox="0 0 3 5"><path d="M0 0.2 L2.4 2.2 L0 4.2 Z" fill="#555"/></svg>
<div class="t" style="left:18.1px;top:137.72px;font-size:7.38px;color:#1a1a1a;transform:scaleX(0.835);transform-origin:0 50%;">Organizational Chart</div>
<svg style="left:82.7px;top:138.95px" width="3" height="5" viewBox="0 0 3 5"><path d="M0 0.2 L2.4 2.2 L0 4.2 Z" fill="#555"/></svg>
<div class="t" style="left:18.1px;top:150.23px;font-size:7.38px;color:#1a1a1a;transform:scaleX(0.835);transform-origin:0 50%;">Family Tree</div>
<svg style="left:82.7px;top:151.46px" width="3" height="5" viewBox="0 0 3 5"><path d="M0 0.2 L2.4 2.2 L0 4.2 Z" fill="#555"/></svg>
<div class="t" style="left:18.1px;top:162.74px;font-size:7.38px;color:#1a1a1a;transform:scaleX(0.835);transform-origin:0 50%;">Graphs and Charts</div>
<svg style="left:82.7px;top:163.97px" width="3" height="5" viewBox="0 0 3 5"><path d="M0 0.2 L2.4 2.2 L0 4.2 Z" fill="#555"/></svg>
<div class="t" style="left:18.1px;top:175.25px;font-size:7.38px;color:#1a1a1a;transform:scaleX(0.835);transform-origin:0 50%;">Business Diagram</div>
<svg style="left:82.7px;top:176.48000000000002px" width="3" height="5" viewBox="0 0 3 5"><path d="M0 0.2 L2.4 2.2 L0 4.2 Z" fill="#555"/></svg>
<div class="t" style="left:18.1px;top:187.76px;font-size:7.38px;color:#1a1a1a;transform:scaleX(0.835);transform-origin:0 50%;">Project Management</div>
<svg style="left:82.7px;top:188.99px" width="3" height="5" viewBox="0 0 3 5"><path d="M0 0.2 L2.4 2.2 L0 4.2 Z" fill="#555"/></svg>
<div class="t" style="left:18.1px;top:200.27px;font-size:7.38px;color:#1a1a1a;transform:scaleX(0.835);transform-origin:0 50%;">Roadmap</div>
<svg style="left:82.7px;top:201.5px" width="3" height="5" viewBox="0 0 3 5"><path d="M0 0.2 L2.4 2.2 L0 4.2 Z" fill="#555"/></svg>
<div class="t" style="left:18.1px;top:212.78px;font-size:7.38px;color:#1a1a1a;transform:scaleX(0.835);transform-origin:0 50%;">Software Engineering</div>
<svg style="left:82.7px;top:214.01px" width="3" height="5" viewBox="0 0 3 5"><path d="M0 0.2 L2.4 2.2 L0 4.2 Z" fill="#555"/></svg>
<div class="t" style="left:18.1px;top:225.29px;font-size:7.38px;color:#1a1a1a;transform:scaleX(0.835);transform-origin:0 50%;">Database Modeling</div>
<svg style="left:82.7px;top:226.52px" width="3" height="5" viewBox="0 0 3 5"><path d="M0 0.2 L2.4 2.2 L0 4.2 Z" fill="#555"/></svg>
<div class="t" style="left:18.1px;top:237.80px;font-size:7.38px;color:#1a1a1a;transform:scaleX(0.835);transform-origin:0 50%;">Network Diagram</div>
<svg style="left:82.7px;top:239.03px" width="3" height="5" viewBox="0 0 3 5"><path d="M0 0.2 L2.4 2.2 L0 4.2 Z" fill="#555"/></svg>
<div class="t" style="left:18.1px;top:250.31px;font-size:7.38px;color:#1a1a1a;transform:scaleX(0.835);transform-origin:0 50%;">Cisco Network</div>
<svg style="left:82.7px;top:251.54px" width="3" height="5" viewBox="0 0 3 5"><path d="M0 0.2 L2.4 2.2 L0 4.2 Z" fill="#555"/></svg>
<div class="t" style="left:18.1px;top:262.82px;font-size:7.38px;color:#1a1a1a;transform:scaleX(0.835);transform-origin:0 50%;">Cloud Service</div>
<svg style="left:82.7px;top:264.05px" width="3" height="5" viewBox="0 0 3 5"><path d="M0 0.2 L2.4 2.2 L0 4.2 Z" fill="#555"/></svg>
<div class="t" style="left:18.1px;top:275.33px;font-size:7.38px;color:#1a1a1a;transform:scaleX(0.835);transform-origin:0 50%;">Floor Plan</div>
<svg style="left:82.7px;top:276.56px" width="3" height="5" viewBox="0 0 3 5"><path d="M0 0.2 L2.4 2.2 L0 4.2 Z" fill="#555"/></svg>
<div class="t" style="left:18.1px;top:287.84px;font-size:7.38px;color:#1a1a1a;transform:scaleX(0.835);transform-origin:0 50%;">Electrical</div>
<svg style="left:82.7px;top:289.07px" width="3" height="5" viewBox="0 0 3 5"><path d="M0 0.2 L2.4 2.2 L0 4.2 Z" fill="#555"/></svg>
<div class="t" style="left:18.1px;top:300.35px;font-size:7.38px;color:#1a1a1a;transform:scaleX(0.835);transform-origin:0 50%;">Industrial Automation</div>
<svg style="left:82.7px;top:301.58px" width="3" height="5" viewBox="0 0 3 5"><path d="M0 0.2 L2.4 2.2 L0 4.2 Z" fill="#555"/></svg>
<div class="t" style="left:18.1px;top:312.86px;font-size:7.38px;color:#1a1a1a;transform:scaleX(0.835);transform-origin:0 50%;">PID</div>
<svg style="left:82.7px;top:314.09px" width="3" height="5" viewBox="0 0 3 5"><path d="M0 0.2 L2.4 2.2 L0 4.2 Z" fill="#555"/></svg>
<div class="t" style="left:18.1px;top:325.37px;font-size:7.38px;color:#1a1a1a;transform:scaleX(0.835);transform-origin:0 50%;">Maps</div>
<svg style="left:82.7px;top:326.59999999999997px" width="3" height="5" viewBox="0 0 3 5"><path d="M0 0.2 L2.4 2.2 L0 4.2 Z" fill="#555"/></svg>
<div class="t" style="left:18.1px;top:337.88px;font-size:7.38px;color:#1a1a1a;transform:scaleX(0.835);transform-origin:0 50%;">Wireframe</div>
<svg style="left:82.7px;top:339.10999999999996px" width="3" height="5" viewBox="0 0 3 5"><path d="M0 0.2 L2.4 2.2 L0 4.2 Z" fill="#555"/></svg>
<div class="t" style="left:18.1px;top:350.39px;font-size:7.38px;color:#1a1a1a;transform:scaleX(0.835);transform-origin:0 50%;">Science</div>
<svg style="left:82.7px;top:351.61999999999995px" width="3" height="5" viewBox="0 0 3 5"><path d="M0 0.2 L2.4 2.2 L0 4.2 Z" fill="#555"/></svg>
<div style="position:absolute;left:8px;top:273.2px;width:79.5px;height:12.1px;border:1.1px solid #e8141b;box-sizing:border-box"></div>
<div style="position:absolute;left:92.3px;top:170.2px;width:101.3px;height:380px;background:#fafafa;box-shadow:0px 0.5px 3px rgba(0,0,0,0.22)"></div>
<div style="position:absolute;left:93.2px;top:535px;width:98.4px;height:12px;background:#ebebeb"></div>
<div class="t" style="left:104.2px;top:175.77px;font-size:7.38px;color:#1a1a1a;transform:scaleX(0.835);transform-origin:0 50%;">Wall Shell and Structure</div>
<div class="t" style="left:104.2px;top:188.27px;font-size:7.38px;color:#1a1a1a;transform:scaleX(0.835);transform-origin:0 50%;">Doors and Windows</div>
<div class="t" style="left:104.2px;top:200.77px;font-size:7.38px;color:#1a1a1a;transform:scaleX(0.835);transform-origin:0 50%;">Alarm and Access Control</div>
<div class="t" style="left:104.2px;top:213.27px;font-size:7.38px;color:#1a1a1a;transform:scaleX(0.835);transform-origin:0 50%;">Appliances</div>
<div class="t" style="left:104.2px;top:225.77px;font-size:7.38px;color:#1a1a1a;transform:scaleX(0.835);transform-origin:0 50%;">Athletic Ground</div>
<div class="t" style="left:104.2px;top:238.27px;font-size:7.38px;color:#1a1a1a;transform:scaleX(0.835);transform-origin:0 50%;">Bathroom</div>
<div class="t" style="left:104.2px;top:250.77px;font-size:7.38px;color:#1a1a1a;transform:scaleX(0.835);transform-origin:0 50%;">Bedroom</div>
<div class="t" style="left:104.2px;top:263.27px;font-size:7.38px;color:#1a1a1a;transform:scaleX(0.835);transform-origin:0 50%;">Building Core</div>
<div class="t" style="left:104.2px;top:275.77px;font-size:7.38px;color:#1a1a1a;transform:scaleX(0.835);transform-origin:0 50%;">Cabinets and Bookcases</div>
<div class="t" style="left:104.2px;top:288.27px;font-size:7.38px;color:#1a1a1a;transform:scaleX(0.835);transform-origin:0 50%;">Carpet</div>
<div class="t" style="left:104.2px;top:300.77px;font-size:7.38px;color:#1a1a1a;transform:scaleX(0.835);transform-origin:0 50%;">Dimensioning</div>
<div class="t" style="left:104.2px;top:313.27px;font-size:7.38px;color:#1a1a1a;transform:scaleX(0.835);transform-origin:0 50%;">Electrical and Telecom</div>
<div class="t" style="left:104.2px;top:325.77px;font-size:7.38px;color:#1a1a1a;transform:scaleX(0.835);transform-origin:0 50%;">Fire and Emergency</div>
<div class="t" style="left:104.2px;top:338.27px;font-size:7.38px;color:#1a1a1a;transform:scaleX(0.835);transform-origin:0 50%;">Garden</div>
<div class="t" style="left:104.2px;top:350.77px;font-size:7.38px;color:#1a1a1a;transform:scaleX(0.835);transform-origin:0 50%;">HVAC Controls</div>
<div class="t" style="left:104.2px;top:363.27px;font-size:7.38px;color:#1a1a1a;transform:scaleX(0.835);transform-origin:0 50%;">HVAC Controls Equipment</div>
<div class="t" style="left:104.2px;top:375.77px;font-size:7.38px;color:#1a1a1a;transform:scaleX(0.835);transform-origin:0 50%;">HVAC Ductwork</div>
<div class="t" style="left:104.2px;top:388.27px;font-size:7.38px;color:#1a1a1a;transform:scaleX(0.835);transform-origin:0 50%;">HVAC Equipment</div>
<div class="t" style="left:104.2px;top:400.77px;font-size:7.38px;color:#1a1a1a;transform:scaleX(0.835);transform-origin:0 50%;">Initiation and Annunciation</div>
<div class="t" style="left:104.2px;top:413.27px;font-size:7.38px;color:#1a1a1a;transform:scaleX(0.835);transform-origin:0 50%;">Kitchen and Dining Room</div>
<div class="t" style="left:104.2px;top:425.77px;font-size:7.38px;color:#1a1a1a;transform:scaleX(0.835);transform-origin:0 50%;">Lighting</div>
<div class="t" style="left:104.2px;top:438.27px;font-size:7.38px;color:#1a1a1a;transform:scaleX(0.835);transform-origin:0 50%;">Office Equipment</div>
<div class="t" style="left:104.2px;top:450.77px;font-size:7.38px;color:#1a1a1a;transform:scaleX(0.835);transform-origin:0 50%;">Office Furniture</div>
<div class="t" style="left:104.2px;top:463.27px;font-size:7.38px;color:#1a1a1a;transform:scaleX(0.835);transform-origin:0 50%;">Plants</div>
<div class="t" style="left:104.2px;top:475.77px;font-size:7.38px;color:#1a1a1a;transform:scaleX(0.835);transform-origin:0 50%;">Plumbing</div>
<div class="t" style="left:104.2px;top:488.27px;font-size:7.38px;color:#1a1a1a;transform:scaleX(0.835);transform-origin:0 50%;">Registers Grills and Diffusers</div>
<div class="t" style="left:104.2px;top:500.77px;font-size:7.38px;color:#1a1a1a;transform:scaleX(0.835);transform-origin:0 50%;">Sofas</div>
<div class="t" style="left:104.2px;top:513.27px;font-size:7.38px;color:#1a1a1a;transform:scaleX(0.835);transform-origin:0 50%;">Tables and Chairs</div>
<div class="t" style="left:104.2px;top:525.77px;font-size:7.38px;color:#1a1a1a;transform:scaleX(0.835);transform-origin:0 50%;">Video Surveillance</div>
<div class="t" style="left:104.2px;top:538.27px;font-size:7.38px;color:#1a1a1a;transform:scaleX(0.835);transform-origin:0 50%;">Elevations</div>
<svg style="left:184.8px;top:539.3px" width="3" height="5" viewBox="0 0 3 5"><path d="M0 0.2 L2.4 2.2 L0 4.2 Z" fill="#555"/></svg>
<div style="position:absolute;left:93.2px;top:535px;width:98.4px;height:11.8px;border:1.4px solid #e8141b;box-sizing:border-box"></div>
<div style="position:absolute;left:196px;top:469.7px;width:115.4px;height:80px;background:#fafafa;box-shadow:0px 0.5px 3px rgba(0,0,0,0.2)"></div>
<div class="t" style="left:206.7px;top:475.87px;font-size:7.38px;color:#1a1a1a;transform:scaleX(0.835);transform-origin:0 50%;">Dining Room (Elevation)</div>
<div class="t" style="left:206.7px;top:488.32px;font-size:7.38px;color:#1a1a1a;transform:scaleX(0.835);transform-origin:0 50%;">Elevations</div>
<div class="t" style="left:206.7px;top:500.77px;font-size:7.38px;color:#1a1a1a;transform:scaleX(0.835);transform-origin:0 50%;">Kitchen (Elevation)</div>
<div class="t" style="left:206.7px;top:513.22px;font-size:7.38px;color:#1a1a1a;transform:scaleX(0.835);transform-origin:0 50%;">Lighting and Handbag (Elevation)</div>
<svg style="left:199.5px;top:513.65px" width="6" height="6" viewBox="0 0 6 6"><path d="M0.6 3.2 L2.2 4.8 L5.2 0.8" fill="none" stroke="#333" stroke-width="0.8"/></svg>
<div class="t" style="left:206.7px;top:525.67px;font-size:7.38px;color:#1a1a1a;transform:scaleX(0.835);transform-origin:0 50%;">Wardrobe</div>
<div class="t" style="left:206.7px;top:538.12px;font-size:7.38px;color:#1a1a1a;transform:scaleX(0.835);transform-origin:0 50%;">Windows and Doors (Elevation)</div>
<svg style="left:199.5px;top:538.55px" width="6" height="6" viewBox="0 0 6 6"><path d="M0.6 3.2 L2.2 4.8 L5.2 0.8" fill="none" stroke="#333" stroke-width="0.8"/></svg>
<div style="position:absolute;left:199.3px;top:473.3px;width:113.7px;height:73.7px;border:1.8px solid #e8141b;box-sizing:border-box"></div>
<svg style="left:95.8px;top:233.2px" width="101.8" height="42.19999999999999" viewBox="0 0 101.8 42.19999999999999"><path d="M95.80 6.00 L11.12 34.48" stroke="#e8141b" stroke-width="1.5" stroke-linecap="round"/><path d="M6.00 36.20 L13.48 30.20 L15.58 36.46 Z" fill="#e8141b"/></svg>
<svg style="left:53.9px;top:477.7px" width="83.29999999999998" height="55.30000000000001" viewBox="0 0 83.29999999999998 55.30000000000001"><path d="M6.00 6.00 L72.68 46.50" stroke="#e8141b" stroke-width="1.5" stroke-linecap="round"/><path d="M77.30 49.30 L67.89 47.45 L71.32 41.81 Z" fill="#e8141b"/></svg>
<svg style="left:317px;top:456.2px" width="99.69999999999999" height="36.19999999999999" viewBox="0 0 99.69999999999999 36.19999999999999"><path d="M93.70 6.00 L11.21 28.76" stroke="#e8141b" stroke-width="1.5" stroke-linecap="round"/><path d="M6.00 30.20 L13.80 24.62 L15.55 30.99 Z" fill="#e8141b"/></svg>
</body></html>
